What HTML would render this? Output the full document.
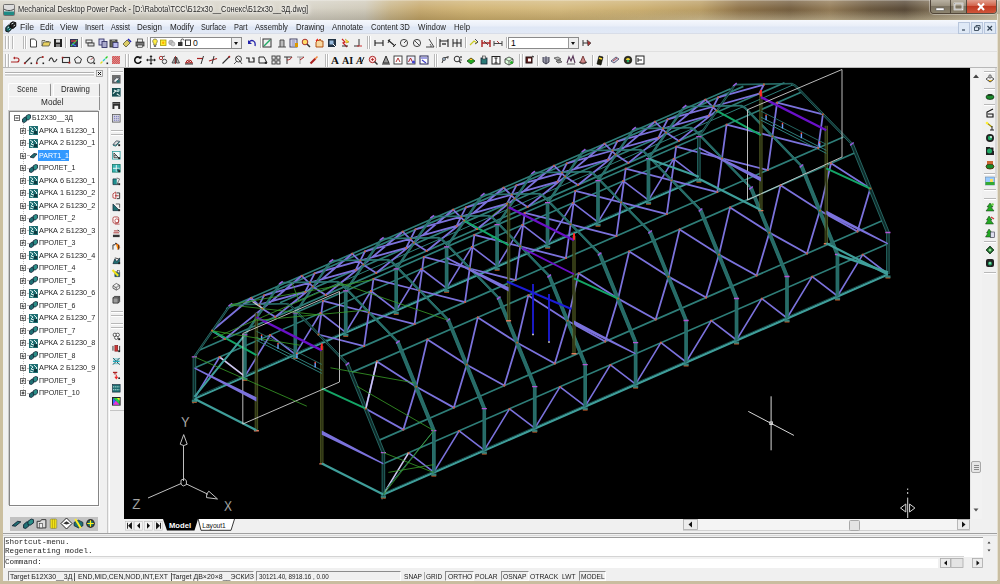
<!DOCTYPE html><html><head><meta charset="utf-8"><title>Mechanical Desktop Power Pack</title><style>
*{box-sizing:border-box;margin:0;padding:0}
html,body{width:1000px;height:584px;overflow:hidden;background:#f0f0f0}
body{position:relative;font-family:"Liberation Sans",sans-serif;font-size:9.4px;color:#000}
.abs{position:absolute}
.t{position:absolute;white-space:nowrap;line-height:1;transform-origin:0 0;color:#262626}
.ic{position:absolute;overflow:visible}
#title{left:0;top:0;width:1000px;height:20px;background:linear-gradient(90deg,#d3cfc2 0px,#d6d2c6 150px,#d4d0c3 300px,#cdc7b6 365px,#c7b283 390px,#c4a566 420px,#cfb06c 470px,#d2b574 560px,#c9aa66 640px,#b7985a 700px,#86683a 740px,#6a5230 790px,#8a7048 830px,#5e4a2e 870px,#4a3a26 905px,#6b5a40 925px,#b9ad94 1000px)}
#titlesh2{left:560px;top:0;width:440px;height:20px;background:linear-gradient(180deg,rgba(210,198,165,0) 50%,rgba(214,203,172,.6) 100%);-webkit-mask-image:linear-gradient(90deg,transparent,#000 140px);mask-image:linear-gradient(90deg,transparent,#000 140px)}
#titlesh{left:0;top:0;width:1000px;height:20px;background:linear-gradient(180deg,rgba(255,255,255,.55) 0,rgba(255,255,255,.25) 1.5px,rgba(255,255,255,.10) 8px,rgba(0,0,0,.12) 20px)}
#ttext{left:17.5px;top:4.5px;font-size:9.45px;white-space:nowrap;color:#111;text-shadow:0 0 4px #fff,0 0 6px #fff,0 0 8px #fff;letter-spacing:-.02px}
#bl{left:0;top:20px;width:2.5px;height:564px;background:#cbbf9f}
#br{left:996.6px;top:14px;width:3.4px;height:570px;background:#c9bea2;border-left:1px solid #e6e1d2}
#bb{left:0;top:580.3px;width:1000px;height:3.7px;background:#c9bd9f}
#menubar{left:2.5px;top:20px;width:994.5px;height:14px;background:linear-gradient(180deg,#f5f8fd 0,#e9eef8 45%,#dfe7f5 55%,#e2e9f6 100%);border-bottom:1px solid #d8dde8}
.mi{position:absolute;top:22.2px;font-size:9.5px;white-space:nowrap;color:#0a0a0a}
#tb{left:3px;top:34px;width:994px;height:34px;background:#f0f0f0}
.grip{position:absolute;width:1px;background:#b9b9b9;box-shadow:1px 0 0 #fff}
.sep{position:absolute;width:1px;height:11px;background:#b4b4b4;box-shadow:1px 0 0 #fff}
.combo{position:absolute;background:#fff;border:1px solid #8a8a8a;height:12px}
.cbtn{position:absolute;top:0;right:0;width:10px;height:10px;background:#eee;border-left:1px solid #999}
.cbtn:after{content:"";position:absolute;left:2px;top:4px;border:2.5px solid transparent;border-top:3px solid #111}
#vp{left:124px;top:68px;width:846px;height:451px;background:#000;overflow:hidden}
#browser{left:3px;top:68px;width:105px;height:465px;background:#f0f0f0}
#tree{left:8.5px;top:110.5px;width:90.5px;height:395.5px;background:#fff;border:1px solid #858585;box-shadow:-1px -1px 0 #c9c9c9,1px 1px 0 #fbfbfb}
.tr{position:absolute;font-size:8.7px;white-space:nowrap;height:12px;line-height:12px;color:#111;letter-spacing:-.1px}
.pm{position:absolute;width:5px;height:5px;border:1px solid #848484;background:#fff}
.pm:before{content:"";position:absolute;left:0.5px;top:1px;width:2px;height:1px;background:#222}
.pm:after{content:"";position:absolute;left:1px;top:0.5px;width:1px;height:2px;background:#222}
#ltb{left:109px;top:68px;width:15px;height:465px;background:#f0f0f0;border-left:1px solid #fff}
#rsb{left:970px;top:68px;width:12px;height:451px;background:#f2f2f2;border-left:1px solid #e4e4e4}
#rtb{left:982px;top:68px;width:15px;height:465px;background:#f0f0f0}
#tabs{left:124px;top:519px;width:846px;height:13px;background:#f0f0f0}
#cmd{left:3px;top:533px;width:994px;height:37px;background:#f0f0f0;border-top:1px solid #a0a0a0}
#cmdbox{left:4px;top:537.3px;width:979px;height:31px;background:#fff;border-top:1px solid #9a9a9a}
.ct{position:absolute;left:5px;font-family:"Liberation Mono",monospace;font-size:7.75px;white-space:nowrap;color:#111;letter-spacing:0}
#status{left:3px;top:570px;width:994px;height:11px;background:#f0f0f0}
.sb{position:absolute;top:571px;height:10px;font-size:8.1px;line-height:10px;white-space:nowrap;color:#222;letter-spacing:-.25px}
.sbox{position:absolute;top:571px;height:10px;border:1px solid #8c8c8c;border-right-color:#fff;border-bottom-color:#fff}
</style></head><body>
<div id="title" class="abs"></div><div id="titlesh" class="abs"></div><div id="titlesh2" class="abs"></div>
<svg class="ic" style="left:3px;top:4px" width="12" height="12" viewBox="0 0 12 12"><rect x=".5" y=".5" width="11" height="11" rx="1" fill="#ddd" stroke="#555" stroke-width=".8"/><path d="M1 5c2 2 8 2 10 0" fill="none" stroke="#444" stroke-width="1"/><rect x="1" y="7.5" width="10" height="3.5" fill="#1e8a84"/></svg>
<div class="t" style="left:17.50px;top:5.31px;font-size:9.2px;transform:scaleX(0.8071);text-shadow:0 0 4px #fff,0 0 6px #fff,0 0 9px #fff;">Mechanical Desktop Power Pack - [D:\Rabota\ТСС\Б12х30__Сонекс\Б12х30__3Д.dwg]</div>
<div class="abs" style="left:930px;top:0;width:67px;height:14px;border-radius:0 0 4px 4px;border:1px solid rgba(60,50,40,.75);border-top:none;overflow:hidden;box-shadow:0 0 0 1px rgba(255,255,255,.35)"><div class="abs" style="left:0;top:0;width:20px;height:13px;background:linear-gradient(180deg,#b9b1a2 0,#9a917f 45%,#7d7462 50%,#8d846f 100%);border-right:1px solid rgba(50,40,30,.7)"></div><div class="abs" style="left:20px;top:0;width:16px;height:13px;background:linear-gradient(180deg,#b9b1a2 0,#9a917f 45%,#7d7462 50%,#8d846f 100%);border-right:1px solid rgba(50,40,30,.7)"></div><div class="abs" style="left:36px;top:0;width:30px;height:13px;background:linear-gradient(180deg,#e2a08e 0,#d2624a 45%,#c03a22 50%,#d0553a 100%)"></div></div>
<svg class="ic" style="left:930px;top:0" width="67" height="14" viewBox="0 0 67 14"><rect x="6" y="8" width="8" height="2.4" fill="#fff" stroke="#555" stroke-width=".5"/><rect x="24.5" y="3.5" width="8" height="6" fill="none" stroke="#fff" stroke-width="1.6"/><rect x="24.5" y="3.5" width="8" height="6" fill="none" stroke="#555" stroke-width=".3"/><path d="M48 3.5l6 6.5M54 3.5l-6 6.5" stroke="#fff" stroke-width="2"/></svg>
<div id="bl" class="abs"></div><div id="br" class="abs"></div><div id="bb" class="abs"></div>
<div id="menubar" class="abs"></div>
<svg class="ic" style="left:4.5px;top:21px" width="12" height="12" viewBox="0 0 12 12"><path d="M.8 6.500l2.700-2.500 2.700 .800v3.700L3.500 11 .8 10.200z" fill="#1a5e62" stroke="#0a0a0a" stroke-width=".9"/><path d="M5 2.500L7.800 .8l3 .8v3.600L8 7.500l-3-.8z" fill="#1d1d1d" stroke="#0a0a0a" stroke-width=".9"/><path d="M6.500 3l2-1M2.500 7l1.500-1M8.500 5l1.500-1" stroke="#e8f6f4" stroke-width=".9"/><path d="M4 9l1.500-1.500" stroke="#7fd" stroke-width=".8"/></svg>
<div class="t" style="left:20.00px;top:22.87px;font-size:8.9px;transform:scaleX(0.9762);">File</div>
<div class="t" style="left:40.00px;top:22.87px;font-size:8.9px;transform:scaleX(0.8803);">Edit</div>
<div class="t" style="left:60.00px;top:22.87px;font-size:8.9px;transform:scaleX(0.9409);">View</div>
<div class="t" style="left:85.00px;top:22.87px;font-size:8.9px;transform:scaleX(0.8311);">Insert</div>
<div class="t" style="left:111.00px;top:22.87px;font-size:8.9px;transform:scaleX(0.8005);">Assist</div>
<div class="t" style="left:137.00px;top:22.87px;font-size:8.9px;transform:scaleX(0.9024);">Design</div>
<div class="t" style="left:169.50px;top:22.87px;font-size:8.9px;transform:scaleX(0.9155);">Modify</div>
<div class="t" style="left:201.00px;top:22.87px;font-size:8.9px;transform:scaleX(0.8150);">Surface</div>
<div class="t" style="left:234.00px;top:22.87px;font-size:8.9px;transform:scaleX(0.8270);">Part</div>
<div class="t" style="left:255.00px;top:22.87px;font-size:8.9px;transform:scaleX(0.8554);">Assembly</div>
<div class="t" style="left:295.50px;top:22.87px;font-size:8.9px;transform:scaleX(0.8730);">Drawing</div>
<div class="t" style="left:332.00px;top:22.87px;font-size:8.9px;transform:scaleX(0.8756);">Annotate</div>
<div class="t" style="left:371.00px;top:22.87px;font-size:8.9px;transform:scaleX(0.8662);">Content 3D</div>
<div class="t" style="left:417.60px;top:22.87px;font-size:8.9px;transform:scaleX(0.8845);">Window</div>
<div class="t" style="left:454.00px;top:22.87px;font-size:8.9px;transform:scaleX(0.8741);">Help</div>
<svg class="ic" style="left:958px;top:21.5px" width="12" height="12" viewBox="0 0 12 12"><rect x=".5" y=".5" width="11" height="11" fill="#dfe9f6" stroke="#b8c6dc" stroke-width="1"/><path d="M4 8h3" stroke="#345" stroke-width="1.2"/></svg>
<svg class="ic" style="left:971px;top:21.5px" width="12" height="12" viewBox="0 0 12 12"><rect x=".5" y=".5" width="11" height="11" fill="#dfe9f6" stroke="#b8c6dc" stroke-width="1"/><path d="M3.5 5h4v3.5h-4zM5 5V3.5h4V7H7.5" fill="none" stroke="#345" stroke-width=".9"/></svg>
<svg class="ic" style="left:984px;top:21.5px" width="12" height="12" viewBox="0 0 12 12"><rect x=".5" y=".5" width="11" height="11" fill="#dfe9f6" stroke="#b8c6dc" stroke-width="1"/><path d="M3.5 4l4.5 4.5M8 4L3.5 8.500" stroke="#345" stroke-width="1.2"/></svg>
<div id="tb" class="abs"></div>
<div class="grip" style="left:5px;top:36px;height:13px"></div>
<div class="grip" style="left:7.5px;top:36px;height:13px"></div>
<div class="grip" style="left:11.5px;top:36px;height:13px"></div>
<div class="grip" style="left:22.5px;top:36px;height:13px"></div>
<div class="grip" style="left:25px;top:36px;height:13px"></div>
<svg class="ic" style="left:28.0px;top:37.5px" width="10" height="10" viewBox="0 0 10 10"><path d="M2.5 1h4l2 2v6h-6z" fill="#fff" stroke="#333" stroke-width=".9"/></svg>
<svg class="ic" style="left:40.5px;top:37.5px" width="10" height="10" viewBox="0 0 10 10"><path d="M1 8l1.5-4h7l-1.5 4z" fill="#e8d060" stroke="#554" stroke-width=".8"/><path d="M1 8V2.5h3l1 1h3" fill="none" stroke="#554" stroke-width=".8"/></svg>
<svg class="ic" style="left:52.7px;top:37.5px" width="10" height="10" viewBox="0 0 10 10"><rect x="1" y="1" width="8" height="8" fill="#222"/><rect x="3" y="1.5" width="4" height="3" fill="#ddd"/><rect x="3" y="6" width="4" height="3" fill="#888"/></svg>
<svg class="ic" style="left:69.0px;top:37.5px" width="10" height="10" viewBox="0 0 10 10"><rect x="1" y="1" width="8" height="8" fill="#335" /><path d="M2 8L8 2" stroke="#4c4" stroke-width="1.2"/><path d="M2 3h5" stroke="#e44" stroke-width="1.2"/><path d="M3 6l4 2" stroke="#48f" stroke-width="1.2"/></svg>
<svg class="ic" style="left:84.7px;top:37.5px" width="10" height="10" viewBox="0 0 10 10"><rect x="1" y="2" width="6" height="3" fill="none" stroke="#333" stroke-width=".9"/><rect x="3" y="5" width="6" height="3" fill="#ddd" stroke="#333" stroke-width=".9"/></svg>
<svg class="ic" style="left:97.7px;top:37.5px" width="10" height="10" viewBox="0 0 10 10"><rect x="1" y="1" width="5" height="6" fill="#cce" stroke="#336" stroke-width=".9"/><rect x="4" y="3.5" width="5" height="6" fill="#aac" stroke="#336" stroke-width=".9"/></svg>
<svg class="ic" style="left:109.4px;top:37.5px" width="10" height="10" viewBox="0 0 10 10"><rect x="1" y="2" width="7" height="7" fill="#665" stroke="#333" stroke-width=".9"/><rect x="4" y="4.5" width="5" height="5" fill="#bbe" stroke="#336" stroke-width=".8"/><rect x="3" y="1" width="3" height="2" fill="#999"/></svg>
<svg class="ic" style="left:122.4px;top:37.5px" width="10" height="10" viewBox="0 0 10 10"><path d="M1 6l4-4 3 3-4 4z" fill="#dc6" stroke="#553" stroke-width=".8"/><path d="M6 1l3 3" stroke="#22a" stroke-width="1.6"/></svg>
<svg class="ic" style="left:135.4px;top:37.5px" width="10" height="10" viewBox="0 0 10 10"><rect x="1" y="4" width="8" height="4" fill="#777" stroke="#333" stroke-width=".8"/><rect x="2.5" y="1" width="5" height="3" fill="#eee" stroke="#333" stroke-width=".7"/><rect x="2.5" y="7" width="5" height="2.5" fill="#ddd" stroke="#333" stroke-width=".6"/></svg>
<div class="sep" style="left:65px;top:37px"></div>
<div class="sep" style="left:81px;top:37px"></div>
<div class="sep" style="left:147px;top:37px"></div>
<div class="combo" style="left:149.5px;top:36.5px;width:92.5px"><div class="cbtn"></div></div>
<svg class="ic" style="left:151px;top:37.5px" width="50" height="10" viewBox="0 0 50 10"><path d="M4 1a2.3 2.3 0 0 1 1.3 4.2V7H2.7V5.200A2.300 2.300 0 0 1 4 1z" fill="#fe4" stroke="#664" stroke-width=".7"/><rect x="2.9" y="7.3" width="2.200" height="1.5" fill="#555"/><rect x="9.5" y="2" width="5.5" height="5.5" fill="#fe3" stroke="#a90" stroke-width=".8"/><circle cx="12.2" cy="4.7" r="1.2" fill="#fa0"/><circle cx="20" cy="4.5" r="2.3" fill="#bbb" stroke="#888" stroke-width=".6"/><circle cx="22" cy="6" r="2" fill="#ccc" stroke="#999" stroke-width=".6"/><rect x="27" y="4" width="4.500" height="4" fill="#333"/><path d="M30 4V2.500a1.500 1.500 0 0 1 3 0" fill="none" stroke="#333" stroke-width=".9"/><rect x="34.500" y="2" width="5" height="5.500" fill="#fff" stroke="#222" stroke-width=".9"/><text x="42" y="8" font-family="Liberation Sans,sans-serif" font-size="8.600" fill="#111">0</text></svg>
<svg class="ic" style="left:246.7px;top:37.5px" width="10" height="10" viewBox="0 0 10 10"><path d="M2 4c3-3 7-1 6 4" fill="none" stroke="#22a" stroke-width="1.3"/><path d="M1 2v4h4z" fill="#22a"/></svg>
<svg class="ic" style="left:262.3px;top:37.5px" width="10" height="10" viewBox="0 0 10 10"><rect x="1" y="1" width="8" height="8" fill="none" stroke="#333" stroke-width="1"/><path d="M2 8L8 2" stroke="#2a6" stroke-width="1.4"/></svg>
<svg class="ic" style="left:276.6px;top:37.5px" width="10" height="10" viewBox="0 0 10 10"><path d="M1 9h8M3 9V2h4v7" fill="#bbb" stroke="#444" stroke-width=".9"/></svg>
<svg class="ic" style="left:288.8px;top:37.5px" width="10" height="10" viewBox="0 0 10 10"><rect x="1" y="1" width="7" height="8" fill="#eef" stroke="#335" stroke-width=".9"/><path d="M2.5 3h4M2.5 5h4M2.5 7h4" stroke="#558" stroke-width=".8"/><rect x="6" y="5" width="3" height="4" fill="#d90"/></svg>
<svg class="ic" style="left:301.3px;top:37.5px" width="10" height="10" viewBox="0 0 10 10"><circle cx="4" cy="4" r="2.8" fill="#fd6" stroke="#a33" stroke-width="1"/><path d="M6 6l3 3" stroke="#333" stroke-width="1.5"/></svg>
<svg class="ic" style="left:313.8px;top:37.5px" width="10" height="10" viewBox="0 0 10 10"><path d="M2 9V4l2-2 1 1 1-2 1 2 2 0v6z" fill="#f8d8a0" stroke="#a40" stroke-width=".9"/><path d="M2 3l2-2" stroke="#e22" stroke-width="1.2"/></svg>
<svg class="ic" style="left:326.5px;top:37.5px" width="10" height="10" viewBox="0 0 10 10"><rect x="1" y="1" width="8" height="8" fill="#234"/><rect x="2.5" y="2.5" width="4" height="4" fill="#9bd"/><path d="M6 6l3 3" stroke="#fff" stroke-width="1"/></svg>
<svg class="ic" style="left:339.5px;top:37.5px" width="10" height="10" viewBox="0 0 10 10"><path d="M2 1l3 3-2 1 4 4" fill="none" stroke="#c22" stroke-width="1.2"/><path d="M5 1l4 3-3 1" fill="#fd3" stroke="#a80" stroke-width=".6"/><path d="M2 8h6" stroke="#333" stroke-width="1"/></svg>
<svg class="ic" style="left:352.5px;top:37.5px" width="10" height="10" viewBox="0 0 10 10"><path d="M6 1v7H1" fill="none" stroke="#333" stroke-width="1"/><path d="M4 8h5" stroke="#c33" stroke-width="1"/></svg>
<div class="sep" style="left:259.5px;top:37px"></div>
<div class="grip" style="left:366.5px;top:36px;height:13px"></div>
<div class="grip" style="left:369px;top:36px;height:13px"></div>
<svg class="ic" style="left:373.6px;top:37.5px" width="10" height="10" viewBox="0 0 10 10"><path d="M1 2v6M9 2v6M1 5h8" fill="none" stroke="#222" stroke-width="1.1"/></svg>
<svg class="ic" style="left:386.6px;top:37.5px" width="10" height="10" viewBox="0 0 10 10"><path d="M1 2l7 6" stroke="#222" stroke-width="1.1"/><path d="M1 5l2-4M6 9l3-3" stroke="#222" stroke-width=".9"/></svg>
<svg class="ic" style="left:398.8px;top:37.5px" width="10" height="10" viewBox="0 0 10 10"><circle cx="5" cy="5" r="3.6" fill="none" stroke="#333" stroke-width=".9"/><path d="M5 5l2.5-2.5" stroke="#333" stroke-width=".9"/></svg>
<svg class="ic" style="left:411.8px;top:37.5px" width="10" height="10" viewBox="0 0 10 10"><circle cx="5" cy="5" r="3.6" fill="none" stroke="#333" stroke-width=".9"/><path d="M2.5 2.5l5 5" stroke="#333" stroke-width=".9"/></svg>
<svg class="ic" style="left:424.8px;top:37.5px" width="10" height="10" viewBox="0 0 10 10"><path d="M1 9h8L4 1" fill="none" stroke="#333" stroke-width=".9"/><path d="M6 9a3 3 0 0 0-1-3" fill="none" stroke="#333" stroke-width=".8"/></svg>
<svg class="ic" style="left:439.0px;top:37.5px" width="10" height="10" viewBox="0 0 10 10"><path d="M1 1v8M9 1v8M1 3h8" fill="none" stroke="#222" stroke-width="1.1"/><path d="M3 6h4" stroke="#222" stroke-width="1.3"/></svg>
<svg class="ic" style="left:452.0px;top:37.5px" width="10" height="10" viewBox="0 0 10 10"><path d="M1 1v8M5 1v8M9 1v8M1 5h8" fill="none" stroke="#222" stroke-width="1"/></svg>
<svg class="ic" style="left:469.0px;top:37.5px" width="10" height="10" viewBox="0 0 10 10"><path d="M1 7l4-4 3 2" fill="none" stroke="#cc2" stroke-width="1.2"/><path d="M6 1l3 3-3 2" fill="none" stroke="#333" stroke-width=".9"/></svg>
<svg class="ic" style="left:480.5px;top:37.5px" width="10" height="10" viewBox="0 0 10 10"><path d="M1 2v7M9 2v7M1 5h8" fill="none" stroke="#a22" stroke-width="1.4"/><path d="M3 3l4 4" stroke="#333" stroke-width=".8"/></svg>
<svg class="ic" style="left:492.7px;top:37.5px" width="10" height="10" viewBox="0 0 10 10"><path d="M1 3v5M9 3v5M1 5.5h8" fill="none" stroke="#444" stroke-width="1"/><path d="M4 3l2 2" stroke="#a22" stroke-width=".9"/></svg>
<div class="sep" style="left:436px;top:37px"></div>
<div class="sep" style="left:465px;top:37px"></div>
<div class="sep" style="left:505.5px;top:37px"></div>
<div class="combo" style="left:508px;top:36.5px;width:71px"><div class="cbtn"></div></div>
<div class="abs" style="left:511px;top:37.5px;font-size:8.6px;line-height:10px">1</div>
<svg class="ic" style="left:582.0px;top:37.5px" width="10" height="10" viewBox="0 0 10 10"><path d="M1 2v6M1 5h5" fill="none" stroke="#333" stroke-width="1"/><path d="M5 2l4 3-3 3z" fill="#a33" stroke="#333" stroke-width=".6"/></svg>
<div class="grip" style="left:5px;top:53.5px;height:13px"></div>
<div class="grip" style="left:7.5px;top:53.5px;height:13px"></div>
<svg class="ic" style="left:10.0px;top:55.0px" width="10" height="10" viewBox="0 0 10 10"><path d="M1 7h6a2 2 0 0 0 0-4H5" fill="none" stroke="#a22" stroke-width="1.1"/><path d="M5 1.5v3L3 3z" fill="#a22"/></svg>
<svg class="ic" style="left:22.8px;top:55.0px" width="10" height="10" viewBox="0 0 10 10"><path d="M1.5 8.5l6-6" stroke="#333" stroke-width="1.1"/><circle cx="1.8" cy="8.2" r="1" fill="#a22"/><rect x="7.5" y="7.5" width="1.6" height="1.6" fill="#222"/></svg>
<svg class="ic" style="left:35.3px;top:55.0px" width="10" height="10" viewBox="0 0 10 10"><path d="M1.5 8.5C1.5 4 4 2 8 2" fill="none" stroke="#333" stroke-width="1.1"/><circle cx="1.8" cy="8.2" r="1" fill="#a22"/><circle cx="7.8" cy="2" r="1" fill="#a22"/><rect x="7.5" y="7.5" width="1.6" height="1.6" fill="#222"/></svg>
<svg class="ic" style="left:48.3px;top:55.0px" width="10" height="10" viewBox="0 0 10 10"><path d="M1 6c1.5-4 3-4 4-1s2.5 2 4-1" fill="none" stroke="#333" stroke-width="1.1"/></svg>
<svg class="ic" style="left:60.8px;top:55.0px" width="10" height="10" viewBox="0 0 10 10"><rect x="1.5" y="2.5" width="7" height="5" fill="none" stroke="#333" stroke-width="1.1"/><rect x="0.8" y="1.8" width="1.6" height="1.6" fill="#a22"/><rect x="7.5" y="6.8" width="1.8" height="1.8" fill="#a22"/></svg>
<svg class="ic" style="left:73.0px;top:55.0px" width="10" height="10" viewBox="0 0 10 10"><path d="M5 1.5l3.5 2.5-1.3 4h-4.4L1.5 4z" fill="none" stroke="#333" stroke-width="1"/></svg>
<svg class="ic" style="left:85.5px;top:55.0px" width="10" height="10" viewBox="0 0 10 10"><circle cx="4.8" cy="4.8" r="3.5" fill="none" stroke="#333" stroke-width="1"/><path d="M4.8 4.8l2-2" stroke="#a22" stroke-width=".9"/><rect x="7.5" y="7.5" width="1.6" height="1.6" fill="#222"/></svg>
<svg class="ic" style="left:98.5px;top:55.0px" width="10" height="10" viewBox="0 0 10 10"><path d="M1.5 8.5l2-2" stroke="#dd2" stroke-width="1.3"/><path d="M4 6l2-2" stroke="#2cc" stroke-width="1.3"/><path d="M6.5 3.5l2-2" stroke="#2c2" stroke-width="1.3"/><rect x="7.5" y="7.5" width="1.6" height="1.6" fill="#222"/></svg>
<svg class="ic" style="left:110.7px;top:55.0px" width="10" height="10" viewBox="0 0 10 10"><rect x="1" y="1" width="8" height="8" fill="#d88"/><path d="M1 3l2-2M1 5l4-4M1 7l6-6M1 9l8-8M3 9l6-6M5 9l4-4M7 9l2-2" stroke="#c44" stroke-width=".7"/></svg>
<div class="grip" style="left:125px;top:53.5px;height:13px"></div>
<div class="grip" style="left:127.5px;top:53.5px;height:13px"></div>
<svg class="ic" style="left:132.8px;top:55.0px" width="10" height="10" viewBox="0 0 10 10"><path d="M7.5 3.2A3.2 3.2 0 1 0 8 6" fill="none" stroke="#111" stroke-width="1.6"/><path d="M5.5 3.5h3v-3z" fill="#111"/></svg>
<svg class="ic" style="left:145.8px;top:55.0px" width="10" height="10" viewBox="0 0 10 10"><path d="M5 1v8M1 5h8" stroke="#222" stroke-width="1.1"/><path d="M5 0l1.5 2h-3zM5 10l1.5-2h-3zM0 5l2-1.5v3zM10 5l-2-1.5v3z" fill="#222"/></svg>
<svg class="ic" style="left:158.3px;top:55.0px" width="10" height="10" viewBox="0 0 10 10"><circle cx="3" cy="3" r="1.7" fill="none" stroke="#a22" stroke-width=".9"/><circle cx="6.5" cy="6.5" r="2.2" fill="none" stroke="#333" stroke-width=".9"/><path d="M4 2l3-1" stroke="#333" stroke-width=".8"/></svg>
<svg class="ic" style="left:171.3px;top:55.0px" width="10" height="10" viewBox="0 0 10 10"><path d="M4.5 1v8" stroke="#a22" stroke-width=".9"/><path d="M4 2L1 8h3zM5.5 2l3 6h-3z" fill="#bbb" stroke="#333" stroke-width=".8"/></svg>
<svg class="ic" style="left:183.5px;top:55.0px" width="10" height="10" viewBox="0 0 10 10"><path d="M1 8h8M2 8a3 3 0 0 1 6 0M3.5 8a1.5 1.5 0 0 1 3 0" fill="none" stroke="#a22" stroke-width="1"/><path d="M1 9h8" stroke="#333" stroke-width="1"/></svg>
<svg class="ic" style="left:195.7px;top:55.0px" width="10" height="10" viewBox="0 0 10 10"><path d="M1 3.5h6" stroke="#a22" stroke-width="1.2"/><path d="M7.5 1L5 9" stroke="#333" stroke-width="1"/></svg>
<svg class="ic" style="left:208.2px;top:55.0px" width="10" height="10" viewBox="0 0 10 10"><path d="M1 6l8-2.5" stroke="#a22" stroke-width="1.2"/><path d="M6 1L4 9" stroke="#333" stroke-width="1"/></svg>
<svg class="ic" style="left:220.7px;top:55.0px" width="10" height="10" viewBox="0 0 10 10"><path d="M1.5 8.5l7-7" stroke="#333" stroke-width="1.1"/><circle cx="8.3" cy="1.7" r="1" fill="#a22"/></svg>
<svg class="ic" style="left:232.9px;top:55.0px" width="10" height="10" viewBox="0 0 10 10"><circle cx="5.5" cy="4" r="3" fill="none" stroke="#333" stroke-width=".9"/><path d="M1 9l3-3M7 6l2 3M3 2l5 5" stroke="#333" stroke-width=".8"/></svg>
<svg class="ic" style="left:245.2px;top:55.0px" width="10" height="10" viewBox="0 0 10 10"><path d="M1 3h3v4h5V3H7" fill="none" stroke="#222" stroke-width="1.2"/></svg>
<svg class="ic" style="left:258.4px;top:55.0px" width="10" height="10" viewBox="0 0 10 10"><path d="M1 2h5l3 6H1z" fill="none" stroke="#222" stroke-width="1"/><rect x="6.8" y="6.8" width="2" height="2" fill="#222"/></svg>
<svg class="ic" style="left:270.9px;top:55.0px" width="10" height="10" viewBox="0 0 10 10"><rect x="1" y="1" width="3.2" height="3.2" fill="none" stroke="#333" stroke-width=".9"/><rect x="5.8" y="1" width="3.2" height="3.2" fill="none" stroke="#333" stroke-width=".9"/><rect x="1" y="5.8" width="3.2" height="3.2" fill="none" stroke="#333" stroke-width=".9"/><rect x="5.8" y="5.8" width="3.2" height="3.2" fill="none" stroke="#333" stroke-width=".9"/></svg>
<svg class="ic" style="left:283.0px;top:55.0px" width="10" height="10" viewBox="0 0 10 10"><path d="M1 2h8" stroke="#333" stroke-width="1"/><path d="M4 2v7" stroke="#333" stroke-width="1"/><path d="M4 5c2 0 4-1 5-3" fill="none" stroke="#a22" stroke-width="1"/></svg>
<svg class="ic" style="left:296.0px;top:55.0px" width="10" height="10" viewBox="0 0 10 10"><path d="M1 2l7 0" stroke="#999" stroke-width="1"/><path d="M4 2v7" stroke="#999" stroke-width="1"/><path d="M4 5l4-3" fill="none" stroke="#a22" stroke-width="1"/></svg>
<svg class="ic" style="left:309.0px;top:55.0px" width="10" height="10" viewBox="0 0 10 10"><path d="M1.5 8.5l5-5" stroke="#a22" stroke-width="2.2"/><path d="M6 4l2.5-2.5" stroke="#e84" stroke-width="1.6"/></svg>
<div class="grip" style="left:324.5px;top:53.5px;height:13px"></div>
<div class="grip" style="left:327px;top:53.5px;height:13px"></div>
<svg class="ic" style="left:330.4px;top:55.0px" width="10" height="10" viewBox="0 0 10 10"><text x="5" y="9" font-family="Liberation Serif,serif" font-size="11" font-weight="bold" text-anchor="middle" fill="#111">A</text></svg>
<svg class="ic" style="left:343.0px;top:55.0px" width="10" height="10" viewBox="0 0 10 10"><text x="4.5" y="9" font-family="Liberation Serif,serif" font-size="10" font-weight="bold" text-anchor="middle" fill="#111">AI</text></svg>
<svg class="ic" style="left:355.0px;top:55.0px" width="10" height="10" viewBox="0 0 10 10"><text x="4.5" y="9" font-family="Liberation Serif,serif" font-size="10" font-weight="bold" font-style="italic" text-anchor="middle" fill="#111">A</text><path d="M6 9l3-7" stroke="#222" stroke-width="1"/></svg>
<svg class="ic" style="left:368.0px;top:55.0px" width="10" height="10" viewBox="0 0 10 10"><circle cx="4.5" cy="4.5" r="3.2" fill="#fdd" stroke="#a22" stroke-width="1"/><path d="M6.5 6.5l3 3" stroke="#333" stroke-width="1.4"/><path d="M3 4.5h3M4.5 3v3" stroke="#a22" stroke-width=".8"/></svg>
<svg class="ic" style="left:380.6px;top:55.0px" width="10" height="10" viewBox="0 0 10 10"><path d="M5 1L2 8h6z" fill="#999" stroke="#222" stroke-width=".9"/><path d="M1 9h8" stroke="#222" stroke-width="1"/></svg>
<svg class="ic" style="left:393.0px;top:55.0px" width="10" height="10" viewBox="0 0 10 10"><rect x="1" y="1" width="8" height="8" fill="#fff" stroke="#333" stroke-width=".9"/><path d="M3 7l2-4 2 4" fill="none" stroke="#a22" stroke-width=".9"/></svg>
<svg class="ic" style="left:406.0px;top:55.0px" width="10" height="10" viewBox="0 0 10 10"><rect x="1" y="1" width="8" height="8" fill="#eef" stroke="#333" stroke-width=".9"/><path d="M2.5 7l2-4 2 4" fill="none" stroke="#a22" stroke-width="1"/><circle cx="7.5" cy="7" r="1.6" fill="#44c"/></svg>
<svg class="ic" style="left:418.8px;top:55.0px" width="10" height="10" viewBox="0 0 10 10"><rect x="1" y="1" width="8" height="8" fill="#fff" stroke="#225" stroke-width="1"/><path d="M2 3h6M3 5l4 3" stroke="#44c" stroke-width="1.2"/></svg>
<div class="grip" style="left:433.5px;top:53.5px;height:13px"></div>
<div class="grip" style="left:436px;top:53.5px;height:13px"></div>
<svg class="ic" style="left:440.4px;top:55.0px" width="10" height="10" viewBox="0 0 10 10"><path d="M2 8l2-5 4-1" fill="none" stroke="#333" stroke-width="1"/><circle cx="4" cy="4" r="1.6" fill="#9ab" stroke="#333" stroke-width=".6"/><path d="M6 2l3-1-1 3" fill="#555"/></svg>
<svg class="ic" style="left:453.4px;top:55.0px" width="10" height="10" viewBox="0 0 10 10"><circle cx="4" cy="4" r="2.8" fill="none" stroke="#333" stroke-width="1"/><path d="M6 6l2 2" stroke="#333" stroke-width="1.3"/><path d="M7 2h2M8 1v2M7 5h2" stroke="#333" stroke-width=".8"/></svg>
<svg class="ic" style="left:465.9px;top:55.0px" width="10" height="10" viewBox="0 0 10 10"><path d="M1 6l4-3 4 3-4 3z" fill="#2a2" stroke="#141" stroke-width=".8"/><path d="M3 5l2-2 2 2" fill="#fc3" stroke="#630" stroke-width=".5"/></svg>
<svg class="ic" style="left:478.5px;top:55.0px" width="10" height="10" viewBox="0 0 10 10"><rect x="2" y="3" width="6" height="6" fill="#2a7a78" stroke="#123" stroke-width=".8"/><rect x="3.5" y="1" width="3" height="3" fill="#ddd" stroke="#333" stroke-width=".6"/></svg>
<svg class="ic" style="left:491.0px;top:55.0px" width="10" height="10" viewBox="0 0 10 10"><rect x="1" y="1.5" width="8" height="7.5" fill="#fff" stroke="#222" stroke-width="1"/><path d="M5 3v5M3.5 3h3M3.5 8h3" stroke="#222" stroke-width="1"/></svg>
<svg class="ic" style="left:504.0px;top:55.0px" width="10" height="10" viewBox="0 0 10 10"><path d="M1 4l4-2 4 2v4l-4 2-4-2z" fill="#dfd" stroke="#333" stroke-width=".8"/><path d="M1 4l4 2 4-2M5 6v4" fill="none" stroke="#333" stroke-width=".7"/><circle cx="7.5" cy="7.5" r="1.5" fill="#2a2"/></svg>
<div class="grip" style="left:519px;top:53.5px;height:13px"></div>
<div class="grip" style="left:521.5px;top:53.5px;height:13px"></div>
<svg class="ic" style="left:525.0px;top:55.0px" width="10" height="10" viewBox="0 0 10 10"><rect x="1" y="2" width="6" height="6" fill="#622" stroke="#211" stroke-width="1"/><rect x="3" y="3.5" width="3" height="3" fill="#fff"/><path d="M7 1l2 1" stroke="#222" stroke-width="1"/></svg>
<svg class="ic" style="left:541.3px;top:55.0px" width="10" height="10" viewBox="0 0 10 10"><path d="M2 2v5l3 2 3-2V2" fill="#99a" stroke="#334" stroke-width=".9"/><path d="M5 1v8" stroke="#334" stroke-width=".8"/></svg>
<svg class="ic" style="left:553.0px;top:55.0px" width="10" height="10" viewBox="0 0 10 10"><path d="M1 3l4-1 3 2-4 1z" fill="#bbb" stroke="#444" stroke-width=".7"/><path d="M3 6l4-1 2 2-4 1z" fill="#999" stroke="#444" stroke-width=".7"/></svg>
<svg class="ic" style="left:566.0px;top:55.0px" width="10" height="10" viewBox="0 0 10 10"><path d="M1 8l2-6 2 4 2-5 2 7" fill="none" stroke="#535" stroke-width="1.1"/><path d="M1 9h8" stroke="#333" stroke-width=".8"/></svg>
<svg class="ic" style="left:577.7px;top:55.0px" width="10" height="10" viewBox="0 0 10 10"><path d="M5 1L2 8h6z" fill="#c88" stroke="#622" stroke-width=".8"/><path d="M1 7l4 2 4-2" fill="none" stroke="#333" stroke-width=".9"/></svg>
<svg class="ic" style="left:594.6px;top:55.0px" width="10" height="10" viewBox="0 0 10 10"><path d="M2 9l2-8 4 1-2 8z" fill="#221" stroke="#000" stroke-width=".6"/><path d="M4 3l3 1" stroke="#fd3" stroke-width="1.5"/></svg>
<svg class="ic" style="left:610.0px;top:55.0px" width="10" height="10" viewBox="0 0 10 10"><path d="M1 6l5-4 3 2-5 4z" fill="#ccd" stroke="#446" stroke-width=".8"/><path d="M3 6l4-3" stroke="#a22" stroke-width=".8"/></svg>
<svg class="ic" style="left:622.7px;top:55.0px" width="10" height="10" viewBox="0 0 10 10"><circle cx="5" cy="5" r="3.8" fill="#332" stroke="#000" stroke-width=".6"/><path d="M3 5a2 2 0 0 1 4 0" fill="#fd3"/><circle cx="5" cy="6" r="1.2" fill="#2a6"/></svg>
<svg class="ic" style="left:635.4px;top:55.0px" width="10" height="10" viewBox="0 0 10 10"><rect x="1" y="1" width="8" height="8" fill="#fff" stroke="#222" stroke-width="1"/><path d="M3 5h4M3 3v4" stroke="#222" stroke-width="1"/></svg>
<div class="sep" style="left:537px;top:54.5px"></div>
<div class="sep" style="left:592px;top:54.5px"></div>
<div class="sep" style="left:607px;top:54.5px"></div>
<div class="abs" style="left:3px;top:50.5px;width:994px;height:1px;background:#e0e0e0"></div>
<div class="abs" style="left:3px;top:67px;width:994px;height:1px;background:#b8b8b8"></div>
<div id="browser" class="abs"></div>
<div class="abs" style="left:5px;top:71.5px;width:89px;height:1px;background:#b0b0b0;box-shadow:0 1px 0 #fff,0 2.500px 0 #b0b0b0,0 3.500px 0 #fff"></div>
<svg class="ic" style="left:96px;top:69.5px" width="7" height="7" viewBox="0 0 7 7"><rect x=".5" y=".5" width="6" height="6" fill="#eee" stroke="#888" stroke-width=".7"/><path d="M2 2l3 3M5 2L2 5" stroke="#111" stroke-width="1"/></svg>
<div class="abs" style="left:8px;top:82px;width:92px;height:28px;background:#f0f0f0"></div>
<div class="abs" style="left:8px;top:83px;width:43px;height:13px;border:1px solid #fdfdfd;border-bottom:none;border-right:1px solid #8e8e8e;border-radius:2px 2px 0 0"></div>
<div class="abs" style="left:53px;top:83px;width:47px;height:13px;border:1px solid #fdfdfd;border-bottom:none;border-right:1px solid #8e8e8e;border-radius:2px 2px 0 0"></div>
<div class="abs" style="left:8px;top:96px;width:92px;height:14px;border-left:1px solid #fdfdfd;border-right:1px solid #8e8e8e;border-top:1px solid #fafafa"></div>
<div class="t" style="left:17.00px;top:84.55px;font-size:8.8px;transform:scaleX(0.8216);">Scene</div>
<div class="t" style="left:61.20px;top:84.55px;font-size:8.8px;transform:scaleX(0.8922);">Drawing</div>
<div class="t" style="left:41.20px;top:97.75px;font-size:8.8px;transform:scaleX(0.9387);">Model</div>
<div id="tree" class="abs"></div>
<svg class="ic" style="left:13.5px;top:115.00px" width="6" height="6" viewBox="0 0 6 6"><rect x=".5" y=".5" width="5" height="5" fill="#fff" stroke="#707070" stroke-width="1"/><path d="M1.500 3h3" stroke="#111" stroke-width=".9"/></svg>
<svg class="ic" style="left:22px;top:113.50px" width="9" height="9" viewBox="0 0 9 9"><path d="M.5 5l2.500-2 2 .5v3l-2.500 2-2-.500z" fill="#1f6f73" stroke="#123" stroke-width=".8"/><path d="M4 2l2.500-1.500 2 .5v3L6.500 6l-2-.5z" fill="#2b8f88" stroke="#123" stroke-width=".8"/></svg>
<div class="t" style="left:32.10px;top:114.10px;font-size:7.8px;transform:scaleX(0.8919);">Б12Х30__3Д</div>
<svg class="ic" style="left:20px;top:127.50px" width="6" height="6" viewBox="0 0 6 6"><rect x=".5" y=".5" width="5" height="5" fill="#fff" stroke="#707070" stroke-width="1"/><path d="M1.500 3h3" stroke="#111" stroke-width=".9"/><path d="M3 1.500v3" stroke="#111" stroke-width=".9"/></svg>
<div class="abs" style="left:26.5px;top:130.00px;width:3px;height:1px;background:#bbb"></div>
<svg class="ic" style="left:29px;top:126.00px" width="9" height="9" viewBox="0 0 9 9"><rect width="9" height="9" fill="#1f6f73"/><path d="M1 1l3 2-2 2 3 1M5 1l3 3-3 4M1 7l3 1" stroke="#d8f0ee" stroke-width="1" fill="none"/><rect x="5" y="5" width="3" height="3" fill="#0c3a40"/></svg>
<div class="t" style="left:38.50px;top:126.60px;font-size:7.8px;transform:scaleX(0.9388);">АРКА 1 Б1230_1</div>
<svg class="ic" style="left:20px;top:140.00px" width="6" height="6" viewBox="0 0 6 6"><rect x=".5" y=".5" width="5" height="5" fill="#fff" stroke="#707070" stroke-width="1"/><path d="M1.500 3h3" stroke="#111" stroke-width=".9"/><path d="M3 1.500v3" stroke="#111" stroke-width=".9"/></svg>
<div class="abs" style="left:26.5px;top:142.50px;width:3px;height:1px;background:#bbb"></div>
<svg class="ic" style="left:29px;top:138.50px" width="9" height="9" viewBox="0 0 9 9"><rect width="9" height="9" fill="#1f6f73"/><path d="M1 1l3 2-2 2 3 1M5 1l3 3-3 4M1 7l3 1" stroke="#d8f0ee" stroke-width="1" fill="none"/><rect x="5" y="5" width="3" height="3" fill="#0c3a40"/></svg>
<div class="t" style="left:38.50px;top:139.10px;font-size:7.8px;transform:scaleX(0.9388);">АРКА 2 Б1230_1</div>
<svg class="ic" style="left:20px;top:152.50px" width="6" height="6" viewBox="0 0 6 6"><rect x=".5" y=".5" width="5" height="5" fill="#fff" stroke="#707070" stroke-width="1"/><path d="M1.500 3h3" stroke="#111" stroke-width=".9"/><path d="M3 1.500v3" stroke="#111" stroke-width=".9"/></svg>
<div class="abs" style="left:26.5px;top:155.00px;width:3px;height:1px;background:#bbb"></div>
<svg class="ic" style="left:29px;top:151.00px" width="9" height="9" viewBox="0 0 9 9"><path d="M1 6l4-3.500 3 .5-3.500 4z" fill="#1f6f73" stroke="#123" stroke-width=".8"/></svg>
<div class="abs" style="left:38px;top:149.90px;width:31.2px;height:10.8px;background:#3399ff"></div>
<div class="t" style="left:38.80px;top:151.60px;font-size:7.8px;transform:scaleX(0.9064);color:#fff;">PART1_1</div>
<svg class="ic" style="left:20px;top:165.00px" width="6" height="6" viewBox="0 0 6 6"><rect x=".5" y=".5" width="5" height="5" fill="#fff" stroke="#707070" stroke-width="1"/><path d="M1.500 3h3" stroke="#111" stroke-width=".9"/><path d="M3 1.500v3" stroke="#111" stroke-width=".9"/></svg>
<div class="abs" style="left:26.5px;top:167.50px;width:3px;height:1px;background:#bbb"></div>
<svg class="ic" style="left:29px;top:163.50px" width="9" height="9" viewBox="0 0 9 9"><path d="M.5 5l2.500-2 2 .5v3l-2.500 2-2-.500z" fill="#1f6f73" stroke="#123" stroke-width=".8"/><path d="M4 2l2.500-1.500 2 .5v3L6.500 6l-2-.5z" fill="#2b8f88" stroke="#123" stroke-width=".8"/></svg>
<div class="t" style="left:38.50px;top:164.10px;font-size:7.8px;transform:scaleX(0.9039);">ПРОЛЕТ_1</div>
<svg class="ic" style="left:20px;top:177.50px" width="6" height="6" viewBox="0 0 6 6"><rect x=".5" y=".5" width="5" height="5" fill="#fff" stroke="#707070" stroke-width="1"/><path d="M1.500 3h3" stroke="#111" stroke-width=".9"/><path d="M3 1.500v3" stroke="#111" stroke-width=".9"/></svg>
<div class="abs" style="left:26.5px;top:180.00px;width:3px;height:1px;background:#bbb"></div>
<svg class="ic" style="left:29px;top:176.00px" width="9" height="9" viewBox="0 0 9 9"><rect width="9" height="9" fill="#1f6f73"/><path d="M1 1l3 2-2 2 3 1M5 1l3 3-3 4M1 7l3 1" stroke="#d8f0ee" stroke-width="1" fill="none"/><rect x="5" y="5" width="3" height="3" fill="#0c3a40"/></svg>
<div class="t" style="left:38.50px;top:176.60px;font-size:7.8px;transform:scaleX(0.9388);">АРКА 6 Б1230_1</div>
<svg class="ic" style="left:20px;top:190.00px" width="6" height="6" viewBox="0 0 6 6"><rect x=".5" y=".5" width="5" height="5" fill="#fff" stroke="#707070" stroke-width="1"/><path d="M1.500 3h3" stroke="#111" stroke-width=".9"/><path d="M3 1.500v3" stroke="#111" stroke-width=".9"/></svg>
<div class="abs" style="left:26.5px;top:192.50px;width:3px;height:1px;background:#bbb"></div>
<svg class="ic" style="left:29px;top:188.50px" width="9" height="9" viewBox="0 0 9 9"><rect width="9" height="9" fill="#1f6f73"/><path d="M1 1l3 2-2 2 3 1M5 1l3 3-3 4M1 7l3 1" stroke="#d8f0ee" stroke-width="1" fill="none"/><rect x="5" y="5" width="3" height="3" fill="#0c3a40"/></svg>
<div class="t" style="left:38.50px;top:189.10px;font-size:7.8px;transform:scaleX(0.9388);">АРКА 1 Б1230_2</div>
<svg class="ic" style="left:20px;top:202.50px" width="6" height="6" viewBox="0 0 6 6"><rect x=".5" y=".5" width="5" height="5" fill="#fff" stroke="#707070" stroke-width="1"/><path d="M1.500 3h3" stroke="#111" stroke-width=".9"/><path d="M3 1.500v3" stroke="#111" stroke-width=".9"/></svg>
<div class="abs" style="left:26.5px;top:205.00px;width:3px;height:1px;background:#bbb"></div>
<svg class="ic" style="left:29px;top:201.00px" width="9" height="9" viewBox="0 0 9 9"><rect width="9" height="9" fill="#1f6f73"/><path d="M1 1l3 2-2 2 3 1M5 1l3 3-3 4M1 7l3 1" stroke="#d8f0ee" stroke-width="1" fill="none"/><rect x="5" y="5" width="3" height="3" fill="#0c3a40"/></svg>
<div class="t" style="left:38.50px;top:201.60px;font-size:7.8px;transform:scaleX(0.9388);">АРКА 2 Б1230_2</div>
<svg class="ic" style="left:20px;top:215.00px" width="6" height="6" viewBox="0 0 6 6"><rect x=".5" y=".5" width="5" height="5" fill="#fff" stroke="#707070" stroke-width="1"/><path d="M1.500 3h3" stroke="#111" stroke-width=".9"/><path d="M3 1.500v3" stroke="#111" stroke-width=".9"/></svg>
<div class="abs" style="left:26.5px;top:217.50px;width:3px;height:1px;background:#bbb"></div>
<svg class="ic" style="left:29px;top:213.50px" width="9" height="9" viewBox="0 0 9 9"><path d="M.5 5l2.500-2 2 .5v3l-2.500 2-2-.500z" fill="#1f6f73" stroke="#123" stroke-width=".8"/><path d="M4 2l2.500-1.500 2 .5v3L6.500 6l-2-.5z" fill="#2b8f88" stroke="#123" stroke-width=".8"/></svg>
<div class="t" style="left:38.50px;top:214.10px;font-size:7.8px;transform:scaleX(0.9039);">ПРОЛЕТ_2</div>
<svg class="ic" style="left:20px;top:227.50px" width="6" height="6" viewBox="0 0 6 6"><rect x=".5" y=".5" width="5" height="5" fill="#fff" stroke="#707070" stroke-width="1"/><path d="M1.500 3h3" stroke="#111" stroke-width=".9"/><path d="M3 1.500v3" stroke="#111" stroke-width=".9"/></svg>
<div class="abs" style="left:26.5px;top:230.00px;width:3px;height:1px;background:#bbb"></div>
<svg class="ic" style="left:29px;top:226.00px" width="9" height="9" viewBox="0 0 9 9"><rect width="9" height="9" fill="#1f6f73"/><path d="M1 1l3 2-2 2 3 1M5 1l3 3-3 4M1 7l3 1" stroke="#d8f0ee" stroke-width="1" fill="none"/><rect x="5" y="5" width="3" height="3" fill="#0c3a40"/></svg>
<div class="t" style="left:38.50px;top:226.60px;font-size:7.8px;transform:scaleX(0.9388);">АРКА 2 Б1230_3</div>
<svg class="ic" style="left:20px;top:240.00px" width="6" height="6" viewBox="0 0 6 6"><rect x=".5" y=".5" width="5" height="5" fill="#fff" stroke="#707070" stroke-width="1"/><path d="M1.500 3h3" stroke="#111" stroke-width=".9"/><path d="M3 1.500v3" stroke="#111" stroke-width=".9"/></svg>
<div class="abs" style="left:26.5px;top:242.50px;width:3px;height:1px;background:#bbb"></div>
<svg class="ic" style="left:29px;top:238.50px" width="9" height="9" viewBox="0 0 9 9"><path d="M.5 5l2.500-2 2 .5v3l-2.500 2-2-.500z" fill="#1f6f73" stroke="#123" stroke-width=".8"/><path d="M4 2l2.500-1.500 2 .5v3L6.500 6l-2-.5z" fill="#2b8f88" stroke="#123" stroke-width=".8"/></svg>
<div class="t" style="left:38.50px;top:239.10px;font-size:7.8px;transform:scaleX(0.9039);">ПРОЛЕТ_3</div>
<svg class="ic" style="left:20px;top:252.50px" width="6" height="6" viewBox="0 0 6 6"><rect x=".5" y=".5" width="5" height="5" fill="#fff" stroke="#707070" stroke-width="1"/><path d="M1.500 3h3" stroke="#111" stroke-width=".9"/><path d="M3 1.500v3" stroke="#111" stroke-width=".9"/></svg>
<div class="abs" style="left:26.5px;top:255.00px;width:3px;height:1px;background:#bbb"></div>
<svg class="ic" style="left:29px;top:251.00px" width="9" height="9" viewBox="0 0 9 9"><rect width="9" height="9" fill="#1f6f73"/><path d="M1 1l3 2-2 2 3 1M5 1l3 3-3 4M1 7l3 1" stroke="#d8f0ee" stroke-width="1" fill="none"/><rect x="5" y="5" width="3" height="3" fill="#0c3a40"/></svg>
<div class="t" style="left:38.50px;top:251.60px;font-size:7.8px;transform:scaleX(0.9388);">АРКА 2 Б1230_4</div>
<svg class="ic" style="left:20px;top:265.00px" width="6" height="6" viewBox="0 0 6 6"><rect x=".5" y=".5" width="5" height="5" fill="#fff" stroke="#707070" stroke-width="1"/><path d="M1.500 3h3" stroke="#111" stroke-width=".9"/><path d="M3 1.500v3" stroke="#111" stroke-width=".9"/></svg>
<div class="abs" style="left:26.5px;top:267.50px;width:3px;height:1px;background:#bbb"></div>
<svg class="ic" style="left:29px;top:263.50px" width="9" height="9" viewBox="0 0 9 9"><path d="M.5 5l2.500-2 2 .5v3l-2.500 2-2-.500z" fill="#1f6f73" stroke="#123" stroke-width=".8"/><path d="M4 2l2.500-1.500 2 .5v3L6.500 6l-2-.5z" fill="#2b8f88" stroke="#123" stroke-width=".8"/></svg>
<div class="t" style="left:38.50px;top:264.10px;font-size:7.8px;transform:scaleX(0.9039);">ПРОЛЕТ_4</div>
<svg class="ic" style="left:20px;top:277.50px" width="6" height="6" viewBox="0 0 6 6"><rect x=".5" y=".5" width="5" height="5" fill="#fff" stroke="#707070" stroke-width="1"/><path d="M1.500 3h3" stroke="#111" stroke-width=".9"/><path d="M3 1.500v3" stroke="#111" stroke-width=".9"/></svg>
<div class="abs" style="left:26.5px;top:280.00px;width:3px;height:1px;background:#bbb"></div>
<svg class="ic" style="left:29px;top:276.00px" width="9" height="9" viewBox="0 0 9 9"><path d="M.5 5l2.500-2 2 .5v3l-2.500 2-2-.500z" fill="#1f6f73" stroke="#123" stroke-width=".8"/><path d="M4 2l2.500-1.500 2 .5v3L6.500 6l-2-.5z" fill="#2b8f88" stroke="#123" stroke-width=".8"/></svg>
<div class="t" style="left:38.50px;top:276.60px;font-size:7.8px;transform:scaleX(0.9039);">ПРОЛЕТ_5</div>
<svg class="ic" style="left:20px;top:290.00px" width="6" height="6" viewBox="0 0 6 6"><rect x=".5" y=".5" width="5" height="5" fill="#fff" stroke="#707070" stroke-width="1"/><path d="M1.500 3h3" stroke="#111" stroke-width=".9"/><path d="M3 1.500v3" stroke="#111" stroke-width=".9"/></svg>
<div class="abs" style="left:26.5px;top:292.50px;width:3px;height:1px;background:#bbb"></div>
<svg class="ic" style="left:29px;top:288.50px" width="9" height="9" viewBox="0 0 9 9"><rect width="9" height="9" fill="#1f6f73"/><path d="M1 1l3 2-2 2 3 1M5 1l3 3-3 4M1 7l3 1" stroke="#d8f0ee" stroke-width="1" fill="none"/><rect x="5" y="5" width="3" height="3" fill="#0c3a40"/></svg>
<div class="t" style="left:38.50px;top:289.10px;font-size:7.8px;transform:scaleX(0.9388);">АРКА 2 Б1230_6</div>
<svg class="ic" style="left:20px;top:302.50px" width="6" height="6" viewBox="0 0 6 6"><rect x=".5" y=".5" width="5" height="5" fill="#fff" stroke="#707070" stroke-width="1"/><path d="M1.500 3h3" stroke="#111" stroke-width=".9"/><path d="M3 1.500v3" stroke="#111" stroke-width=".9"/></svg>
<div class="abs" style="left:26.5px;top:305.00px;width:3px;height:1px;background:#bbb"></div>
<svg class="ic" style="left:29px;top:301.00px" width="9" height="9" viewBox="0 0 9 9"><path d="M.5 5l2.500-2 2 .5v3l-2.500 2-2-.500z" fill="#1f6f73" stroke="#123" stroke-width=".8"/><path d="M4 2l2.500-1.500 2 .5v3L6.500 6l-2-.5z" fill="#2b8f88" stroke="#123" stroke-width=".8"/></svg>
<div class="t" style="left:38.50px;top:301.60px;font-size:7.8px;transform:scaleX(0.9039);">ПРОЛЕТ_6</div>
<svg class="ic" style="left:20px;top:315.00px" width="6" height="6" viewBox="0 0 6 6"><rect x=".5" y=".5" width="5" height="5" fill="#fff" stroke="#707070" stroke-width="1"/><path d="M1.500 3h3" stroke="#111" stroke-width=".9"/><path d="M3 1.500v3" stroke="#111" stroke-width=".9"/></svg>
<div class="abs" style="left:26.5px;top:317.50px;width:3px;height:1px;background:#bbb"></div>
<svg class="ic" style="left:29px;top:313.50px" width="9" height="9" viewBox="0 0 9 9"><rect width="9" height="9" fill="#1f6f73"/><path d="M1 1l3 2-2 2 3 1M5 1l3 3-3 4M1 7l3 1" stroke="#d8f0ee" stroke-width="1" fill="none"/><rect x="5" y="5" width="3" height="3" fill="#0c3a40"/></svg>
<div class="t" style="left:38.50px;top:314.10px;font-size:7.8px;transform:scaleX(0.9388);">АРКА 2 Б1230_7</div>
<svg class="ic" style="left:20px;top:327.50px" width="6" height="6" viewBox="0 0 6 6"><rect x=".5" y=".5" width="5" height="5" fill="#fff" stroke="#707070" stroke-width="1"/><path d="M1.500 3h3" stroke="#111" stroke-width=".9"/><path d="M3 1.500v3" stroke="#111" stroke-width=".9"/></svg>
<div class="abs" style="left:26.5px;top:330.00px;width:3px;height:1px;background:#bbb"></div>
<svg class="ic" style="left:29px;top:326.00px" width="9" height="9" viewBox="0 0 9 9"><path d="M.5 5l2.500-2 2 .5v3l-2.500 2-2-.500z" fill="#1f6f73" stroke="#123" stroke-width=".8"/><path d="M4 2l2.500-1.500 2 .5v3L6.500 6l-2-.5z" fill="#2b8f88" stroke="#123" stroke-width=".8"/></svg>
<div class="t" style="left:38.50px;top:326.60px;font-size:7.8px;transform:scaleX(0.9039);">ПРОЛЕТ_7</div>
<svg class="ic" style="left:20px;top:340.00px" width="6" height="6" viewBox="0 0 6 6"><rect x=".5" y=".5" width="5" height="5" fill="#fff" stroke="#707070" stroke-width="1"/><path d="M1.500 3h3" stroke="#111" stroke-width=".9"/><path d="M3 1.500v3" stroke="#111" stroke-width=".9"/></svg>
<div class="abs" style="left:26.5px;top:342.50px;width:3px;height:1px;background:#bbb"></div>
<svg class="ic" style="left:29px;top:338.50px" width="9" height="9" viewBox="0 0 9 9"><rect width="9" height="9" fill="#1f6f73"/><path d="M1 1l3 2-2 2 3 1M5 1l3 3-3 4M1 7l3 1" stroke="#d8f0ee" stroke-width="1" fill="none"/><rect x="5" y="5" width="3" height="3" fill="#0c3a40"/></svg>
<div class="t" style="left:38.50px;top:339.10px;font-size:7.8px;transform:scaleX(0.9388);">АРКА 2 Б1230_8</div>
<svg class="ic" style="left:20px;top:352.50px" width="6" height="6" viewBox="0 0 6 6"><rect x=".5" y=".5" width="5" height="5" fill="#fff" stroke="#707070" stroke-width="1"/><path d="M1.500 3h3" stroke="#111" stroke-width=".9"/><path d="M3 1.500v3" stroke="#111" stroke-width=".9"/></svg>
<div class="abs" style="left:26.5px;top:355.00px;width:3px;height:1px;background:#bbb"></div>
<svg class="ic" style="left:29px;top:351.00px" width="9" height="9" viewBox="0 0 9 9"><path d="M.5 5l2.500-2 2 .5v3l-2.500 2-2-.500z" fill="#1f6f73" stroke="#123" stroke-width=".8"/><path d="M4 2l2.500-1.500 2 .5v3L6.500 6l-2-.5z" fill="#2b8f88" stroke="#123" stroke-width=".8"/></svg>
<div class="t" style="left:38.50px;top:351.60px;font-size:7.8px;transform:scaleX(0.9039);">ПРОЛЕТ_8</div>
<svg class="ic" style="left:20px;top:365.00px" width="6" height="6" viewBox="0 0 6 6"><rect x=".5" y=".5" width="5" height="5" fill="#fff" stroke="#707070" stroke-width="1"/><path d="M1.500 3h3" stroke="#111" stroke-width=".9"/><path d="M3 1.500v3" stroke="#111" stroke-width=".9"/></svg>
<div class="abs" style="left:26.5px;top:367.50px;width:3px;height:1px;background:#bbb"></div>
<svg class="ic" style="left:29px;top:363.50px" width="9" height="9" viewBox="0 0 9 9"><rect width="9" height="9" fill="#1f6f73"/><path d="M1 1l3 2-2 2 3 1M5 1l3 3-3 4M1 7l3 1" stroke="#d8f0ee" stroke-width="1" fill="none"/><rect x="5" y="5" width="3" height="3" fill="#0c3a40"/></svg>
<div class="t" style="left:38.50px;top:364.10px;font-size:7.8px;transform:scaleX(0.9388);">АРКА 2 Б1230_9</div>
<svg class="ic" style="left:20px;top:377.50px" width="6" height="6" viewBox="0 0 6 6"><rect x=".5" y=".5" width="5" height="5" fill="#fff" stroke="#707070" stroke-width="1"/><path d="M1.500 3h3" stroke="#111" stroke-width=".9"/><path d="M3 1.500v3" stroke="#111" stroke-width=".9"/></svg>
<div class="abs" style="left:26.5px;top:380.00px;width:3px;height:1px;background:#bbb"></div>
<svg class="ic" style="left:29px;top:376.00px" width="9" height="9" viewBox="0 0 9 9"><path d="M.5 5l2.500-2 2 .5v3l-2.500 2-2-.500z" fill="#1f6f73" stroke="#123" stroke-width=".8"/><path d="M4 2l2.500-1.500 2 .5v3L6.500 6l-2-.5z" fill="#2b8f88" stroke="#123" stroke-width=".8"/></svg>
<div class="t" style="left:38.50px;top:376.60px;font-size:7.8px;transform:scaleX(0.9039);">ПРОЛЕТ_9</div>
<svg class="ic" style="left:20px;top:390.00px" width="6" height="6" viewBox="0 0 6 6"><rect x=".5" y=".5" width="5" height="5" fill="#fff" stroke="#707070" stroke-width="1"/><path d="M1.500 3h3" stroke="#111" stroke-width=".9"/><path d="M3 1.500v3" stroke="#111" stroke-width=".9"/></svg>
<div class="abs" style="left:26.5px;top:392.50px;width:3px;height:1px;background:#bbb"></div>
<svg class="ic" style="left:29px;top:388.50px" width="9" height="9" viewBox="0 0 9 9"><path d="M.5 5l2.500-2 2 .5v3l-2.500 2-2-.500z" fill="#1f6f73" stroke="#123" stroke-width=".8"/><path d="M4 2l2.500-1.500 2 .5v3L6.500 6l-2-.5z" fill="#2b8f88" stroke="#123" stroke-width=".8"/></svg>
<div class="t" style="left:38.50px;top:389.10px;font-size:7.8px;transform:scaleX(0.9102);">ПРОЛЕТ_10</div>
<div class="abs" style="left:22.8px;top:123px;width:1px;height:270px;background:repeating-linear-gradient(180deg,#bdbdbd 0,#bdbdbd 1px,transparent 1px,transparent 2px)"></div>
<div class="abs" style="left:10px;top:516.5px;width:88px;height:14px;background:#c2c2c2"></div>
<svg class="ic" style="left:11.0px;top:518px" width="11" height="11" viewBox="0 0 10 10"><path d="M1 7l5-4 3 .5-5 4z" fill="#1f6f73" stroke="#123" stroke-width=".8"/></svg>
<svg class="ic" style="left:23.4px;top:518px" width="11" height="11" viewBox="0 0 10 10"><path d="M.5 6l3-2.500 2 .5v3l-3 2.500-2-.5z" fill="#1f6f73" stroke="#123" stroke-width=".8"/><path d="M4.500 3l3-2 2 .5v3l-3 2-2-.5z" fill="#2b8f88" stroke="#123" stroke-width=".8"/></svg>
<svg class="ic" style="left:35.8px;top:518px" width="11" height="11" viewBox="0 0 10 10"><path d="M1 3h3l1-1.500h4V9H1z" fill="#ddd" stroke="#333" stroke-width=".9"/><rect x="3" y="5" width="3" height="4" fill="#eee" stroke="#444" stroke-width=".6"/></svg>
<svg class="ic" style="left:48.2px;top:518px" width="11" height="11" viewBox="0 0 10 10"><rect x="2" y="1" width="6" height="8.500" rx="1" fill="#f2e21a" stroke="#886" stroke-width=".7"/><path d="M4 1v8.500M6 1v8.500" stroke="#a90" stroke-width=".6"/></svg>
<svg class="ic" style="left:60.6px;top:518px" width="11" height="11" viewBox="0 0 10 10"><path d="M5 0L10 5 5 10 0 5z" fill="#fff" stroke="#222" stroke-width=".9"/><path d="M2 5l3-2 3 2-3 1z" fill="#333"/></svg>
<svg class="ic" style="left:73.0px;top:518px" width="11" height="11" viewBox="0 0 10 10"><path d="M1 4l4-2 4 2v3L5 9 1 7z" fill="#1f6f73" stroke="#123" stroke-width=".7"/><path d="M2 1l5 8" stroke="#fe2" stroke-width="1.800"/></svg>
<svg class="ic" style="left:85.4px;top:518px" width="11" height="11" viewBox="0 0 10 10"><circle cx="5" cy="5" r="4" fill="#333"/><path d="M3 3h4v4H3z" fill="#1f8f6f"/><path d="M2 5h6M5 2v6" stroke="#fe2" stroke-width="1"/></svg>
<div id="ltb" class="abs"></div>
<div class="abs" style="left:107px;top:68px;width:1px;height:465px;background:#c8c8c8"></div>
<svg class="ic" style="left:111.8px;top:75.2px" width="8.600" height="8.600" viewBox="0 0 9 9"><rect width="9" height="9" fill="#6e6e6e"/><path d="M1 7l3.500-4 3.500 .5-4 4z" fill="#f4f4f4" stroke="#123" stroke-width=".6"/><rect x="5" y="5.500" width="3" height="2.500" fill="#1f6f73"/></svg>
<svg class="ic" style="left:111.8px;top:88.2px" width="8.600" height="8.600" viewBox="0 0 9 9"><rect width="9" height="9" fill="#164e52"/><path d="M1 6l3-3 3 1M2 2l2 1M5 6l3 2" stroke="#e8f4f2" stroke-width="1.100" fill="none"/><rect x="5.500" y="1" width="2.500" height="2.500" fill="#9cc"/></svg>
<svg class="ic" style="left:111.8px;top:101.4px" width="8.600" height="8.600" viewBox="0 0 9 9"><path d="M.5 1h8v7.500H6.500V5h-4v3.500H.5z" fill="#2c2c2c"/><path d="M1 2.500h7" stroke="#888" stroke-width=".8"/></svg>
<svg class="ic" style="left:111.8px;top:114.4px" width="8.600" height="8.600" viewBox="0 0 9 9"><rect x=".5" y=".5" width="8" height="8" fill="#d8d8e4" stroke="#555" stroke-width=".8"/><path d="M2 2.500h5M2 4.500h5M2 6.500h5" stroke="#55a" stroke-width="1" stroke-dasharray="1 1"/></svg>
<svg class="ic" style="left:111.8px;top:138.2px" width="8.600" height="8.600" viewBox="0 0 9 9"><path d="M1 7l3.500-4 3.500 .5-4 4z" fill="#e0e0e0" stroke="#234" stroke-width=".8"/><path d="M1 7.500l3 1 4-4.500" fill="none" stroke="#1f6f73" stroke-width="1"/><rect x="6.500" y="6.500" width="2" height="2" fill="#222"/></svg>
<svg class="ic" style="left:111.8px;top:150.7px" width="8.600" height="8.600" viewBox="0 0 9 9"><rect x=".5" y=".5" width="8" height="8" fill="#f4fbfb" stroke="#2a9a9a" stroke-width=".8"/><path d="M2 7V2l5 5zM2 5h3" fill="none" stroke="#222" stroke-width=".8"/><rect x="6.500" y="6.500" width="2" height="2" fill="#222"/></svg>
<svg class="ic" style="left:111.8px;top:163.7px" width="8.600" height="8.600" viewBox="0 0 9 9"><rect x=".5" y=".5" width="8" height="8" fill="#39b5b5" stroke="#176" stroke-width=".8"/><path d="M1 4.500h7M4.500 1v7" stroke="#fff" stroke-width=".9"/><rect x="5" y="5" width="2.500" height="2.500" fill="#1f6f73"/><rect x="6.500" y="6.500" width="2" height="2" fill="#222"/></svg>
<svg class="ic" style="left:111.8px;top:176.9px" width="8.600" height="8.600" viewBox="0 0 9 9"><path d="M1 2h5v6H1z" fill="#1f8f8f" stroke="#123" stroke-width=".7"/><path d="M5 1l3 1-3 6" fill="#eee" stroke="#333" stroke-width=".6"/><rect x="6.500" y="6.500" width="2" height="2" fill="#222"/></svg>
<svg class="ic" style="left:111.8px;top:190.7px" width="8.600" height="8.600" viewBox="0 0 9 9"><path d="M1 3l3-2v7l-3-1z" fill="#fff" stroke="#a22" stroke-width=".8"/><path d="M5 2h3v6H5" fill="none" stroke="#222" stroke-width=".9"/><path d="M3 5h4" stroke="#a22" stroke-width=".9"/></svg>
<svg class="ic" style="left:111.8px;top:203.2px" width="8.600" height="8.600" viewBox="0 0 9 9"><path d="M1 1v7h7z" fill="#1f6f73" stroke="#123" stroke-width=".7"/><path d="M4 1h4v4" fill="none" stroke="#333" stroke-width=".8"/><rect x="6.500" y="6.500" width="2" height="2" fill="#222"/></svg>
<svg class="ic" style="left:111.8px;top:216.2px" width="8.600" height="8.600" viewBox="0 0 9 9"><rect x="1" y="1" width="6" height="6.500" rx="1.500" fill="#fff" stroke="#a33" stroke-width=".9"/><circle cx="5" cy="5" r="2" fill="none" stroke="#a33" stroke-width=".8"/><path d="M3 8.500h5" stroke="#a33" stroke-width=".8"/></svg>
<svg class="ic" style="left:111.8px;top:229.4px" width="8.600" height="8.600" viewBox="0 0 9 9"><path d="M2 2h5M1.500 4h6" stroke="#a33" stroke-width="1"/><path d="M1 6h7v2.500H1z" fill="#333"/><path d="M6 1l2 1.500" stroke="#333" stroke-width=".9"/></svg>
<svg class="ic" style="left:111.8px;top:242.4px" width="8.600" height="8.600" viewBox="0 0 9 9"><path d="M1 8V3h2l1-2 2 1.500" fill="none" stroke="#222" stroke-width=".9"/><path d="M4 2l3 1 1 3-2 2" fill="#f80" stroke="#c40" stroke-width=".7"/><path d="M7 3v5" stroke="#222" stroke-width=".9"/></svg>
<svg class="ic" style="left:111.8px;top:255.7px" width="8.600" height="8.600" viewBox="0 0 9 9"><path d="M1 8l2-5 2 3 3-4v6z" fill="#1f6f73" stroke="#123" stroke-width=".7"/><path d="M3 2l4 1" stroke="#333" stroke-width=".9"/><rect x="6.500" y="6.500" width="2" height="2" fill="#222"/></svg>
<svg class="ic" style="left:111.8px;top:268.7px" width="8.600" height="8.600" viewBox="0 0 9 9"><path d="M3 3h5v5H3z" fill="#1f6f73" stroke="#123" stroke-width=".6"/><path d="M.5 1l6 6" stroke="#f2e21a" stroke-width="2.200"/><rect x="5.500" y="1.500" width="2.500" height="2.500" fill="#eee" stroke="#333" stroke-width=".5"/></svg>
<svg class="ic" style="left:111.8px;top:281.9px" width="8.600" height="8.600" viewBox="0 0 9 9"><path d="M1 4l3.500-2.500 3.500 2v3l-3.500 2-3.500-2z" fill="#f2f2f2" stroke="#333" stroke-width=".7"/><path d="M1 4l3.500 2 3.500-2.500M4.500 6v2.500" stroke="#333" stroke-width=".6" fill="none"/><path d="M2 7l5-4" stroke="#333" stroke-width=".6" stroke-dasharray="1 .8"/></svg>
<svg class="ic" style="left:111.8px;top:295.2px" width="8.600" height="8.600" viewBox="0 0 9 9"><path d="M1 3l1.500-1.500h5.500v5.500l-1.500 1.500h-5.500z" fill="#9a9a9a" stroke="#222" stroke-width=".8"/><path d="M1 3h5.500v5.500M6.500 3l1.500-1.500" fill="none" stroke="#222" stroke-width=".7"/></svg>
<svg class="ic" style="left:111.8px;top:331.9px" width="8.600" height="8.600" viewBox="0 0 9 9"><circle cx="3" cy="3" r="1.800" fill="#fff" stroke="#333" stroke-width=".8"/><circle cx="6" cy="3" r="1.800" fill="#fff" stroke="#333" stroke-width=".8"/><circle cx="4.500" cy="6" r="1.800" fill="#fff" stroke="#333" stroke-width=".8"/><rect x="6.500" y="6.500" width="2" height="2" fill="#222"/></svg>
<svg class="ic" style="left:111.8px;top:344.4px" width="8.600" height="8.600" viewBox="0 0 9 9"><path d="M1 2v5M8 2v5" stroke="#222" stroke-width=".9"/><rect x="3" y="1.500" width="3" height="6" fill="#c33" stroke="#711" stroke-width=".6"/><rect x="6.500" y="6.500" width="2" height="2" fill="#222"/></svg>
<svg class="ic" style="left:111.8px;top:356.9px" width="8.600" height="8.600" viewBox="0 0 9 9"><path d="M1 1l7 7M8 1L1 8" stroke="#222" stroke-width=".9"/><path d="M1 4.500h7" stroke="#2ab" stroke-width="1.600"/><path d="M1 2h7M1 7h7" stroke="#2ab" stroke-width=".7"/></svg>
<svg class="ic" style="left:111.8px;top:370.7px" width="8.600" height="8.600" viewBox="0 0 9 9"><path d="M1 1.500h4.500" stroke="#a22" stroke-width="1.300"/><path d="M2 3h2.500" stroke="#a22" stroke-width="1"/><path d="M4.500 4v3M3 6l1.500 2 1.500-2" stroke="#e22" stroke-width="1.100" fill="none"/><circle cx="7.500" cy="7.500" r="1" fill="#222"/></svg>
<svg class="ic" style="left:111.8px;top:383.7px" width="8.600" height="8.600" viewBox="0 0 9 9"><rect x=".5" y=".5" width="8" height="8" fill="#1f6f73" stroke="#123" stroke-width=".6"/><path d="M1 3h7M1 6h7" stroke="#bfe8e4" stroke-width="1" stroke-dasharray="1.500 .7"/></svg>
<svg class="ic" style="left:111.8px;top:396.9px" width="8.600" height="8.600" viewBox="0 0 9 9"><rect width="9" height="9" fill="#222"/><path d="M1 1h7v7z" fill="#2c4"/><path d="M1 1v7h7z" fill="#36f"/><path d="M1 8l3-4 4 4z" fill="#e3c"/><path d="M5 1h3v3z" fill="#fe2"/></svg>
<div class="abs" style="left:110.5px;top:71px;width:12px;height:1px;background:#b8b8b8;box-shadow:0 1px 0 #fff"></div>
<div class="abs" style="left:110.5px;top:130px;width:12px;height:1px;background:#b8b8b8;box-shadow:0 1px 0 #fff"></div>
<div class="abs" style="left:110.5px;top:134px;width:12px;height:1px;background:#b8b8b8;box-shadow:0 1px 0 #fff"></div>
<div class="abs" style="left:110.5px;top:311px;width:12px;height:1px;background:#b8b8b8;box-shadow:0 1px 0 #fff"></div>
<div class="abs" style="left:110.5px;top:315px;width:12px;height:1px;background:#b8b8b8;box-shadow:0 1px 0 #fff"></div>
<div class="abs" style="left:110.5px;top:323px;width:12px;height:1px;background:#b8b8b8;box-shadow:0 1px 0 #fff"></div>
<div class="abs" style="left:110.5px;top:327px;width:12px;height:1px;background:#b8b8b8;box-shadow:0 1px 0 #fff"></div>
<div class="abs" style="left:110px;top:410px;width:13.500px;height:1px;background:#c4c4c4"></div>
<div id="vp" class="abs"><svg width="846" height="450" viewBox="124 68 846 450" style="display:block">
<path d="M199.6 350.0L704.1 129.9M226.1 308.8L730.6 88.7M238.9 306.5L743.4 86.4M280.0 302.8L784.5 82.7M378.2 440.6L882.7 220.5M351.7 372.4L856.2 152.3M338.9 357.1L843.4 137.0M297.8 311.8L802.3 91.7" fill="none" stroke="#2e7d78" stroke-width="1.7" stroke-linecap="butt" stroke-linejoin="round"/>
<path d="M194.4 368.0L698.9 147.9M383.4 463.8L887.9 243.7" fill="none" stroke="#2e7d78" stroke-width="1.6" stroke-linecap="butt" stroke-linejoin="round"/>
<path d="M194.4 398.8L698.9 178.7" fill="none" stroke="#3f9e9a" stroke-width="1.9" stroke-linecap="butt" stroke-linejoin="round"/>
<path d="M383.4 494.6L887.9 274.5" fill="none" stroke="#3f9e9a" stroke-width="2.2" stroke-linecap="butt" stroke-linejoin="round"/>
<path d="M288.9 304.8L793.4 84.7" fill="none" stroke="#2e7d78" stroke-width="1.0" stroke-linecap="butt" stroke-linejoin="round"/>
<path d="M194.4 397.2L698.9 177.1M383.4 493.0L887.9 272.9" fill="none" stroke="#1d5c5a" stroke-width="0.8" stroke-linecap="butt" stroke-linejoin="round"/>
<path d="M212.0 330.7L251.3 297.8L262.4 308.7L224.8 339.0L212.0 330.7M262.4 308.7L301.8 275.8L312.9 286.7L275.3 317.0L262.4 308.7M312.9 286.7L352.2 253.7L363.3 264.7L325.7 295.0L312.9 286.7M363.3 264.7L402.7 231.7L413.8 242.7L376.2 273.0L363.3 264.7M413.8 242.7L453.1 209.7L464.2 220.7L426.6 251.0L413.8 242.7M464.2 220.7L503.6 187.7L514.7 198.6L477.1 229.0L464.2 220.7M514.7 198.6L554.0 165.7L565.1 176.6L527.5 207.0L514.7 198.6M565.1 176.6L604.5 143.7L615.6 154.6L578.0 185.0L565.1 176.6M615.6 154.6L654.9 121.7L666.0 132.6L628.4 162.9L615.6 154.6M666.0 132.6L705.4 99.7L716.5 110.6L678.9 140.9L666.0 132.6M259.4 304.6L305.2 291.8L309.9 282.6L264.1 295.4L259.4 304.6M309.9 282.6L355.7 269.8L360.3 260.6L314.6 273.4L309.9 282.6M360.3 260.6L406.1 247.8L410.8 238.6L365.0 251.4L360.3 260.6M410.8 238.6L456.6 225.8L461.2 216.6L415.5 229.4L410.8 238.6M461.2 216.6L507.0 203.7L511.7 194.6L465.9 207.4L461.2 216.6M511.7 194.6L557.5 181.7L562.1 172.6L516.4 185.4L511.7 194.6M562.1 172.6L607.9 159.7L612.6 150.5L566.8 163.4L562.1 172.6M612.6 150.5L658.4 137.7L663.0 128.5L617.3 141.4L612.6 150.5M663.0 128.5L708.8 115.7L713.5 106.5L667.7 119.4L663.0 128.5M713.5 106.5L759.3 93.7L763.9 84.5L718.2 97.4L713.5 106.5M365.8 408.7L376.9 361.4L416.3 386.7L403.4 429.6L365.8 408.7M416.3 386.7L427.4 339.4L466.7 364.7L453.9 407.6L416.3 386.7M466.7 364.7L477.8 317.4L517.2 342.7L504.3 385.5L466.7 364.7M517.2 342.7L528.3 295.4L567.6 320.7L554.8 363.5L517.2 342.7M567.6 320.7L578.7 273.4L618.1 298.6L605.2 341.5L567.6 320.7M618.1 298.6L629.2 251.4L668.5 276.6L655.7 319.5L618.1 298.6M668.5 276.6L679.6 229.4L719.0 254.6L706.1 297.5L668.5 276.6M719.0 254.6L730.1 207.4L769.4 232.6L756.6 275.5L719.0 254.6M769.4 232.6L780.5 185.3L819.9 210.6L807.0 253.5L769.4 232.6M819.9 210.6L831.0 163.3L870.3 188.6L857.5 231.5L819.9 210.6M318.4 334.5L323.0 300.8L368.8 312.5L364.1 346.1L318.4 334.5M368.8 312.5L373.5 278.8L419.3 290.5L414.6 324.1L368.8 312.5M419.3 290.5L423.9 256.8L469.7 268.5L465.0 302.1L419.3 290.5M469.7 268.5L474.4 234.8L520.2 246.4L515.5 280.1L469.7 268.5M520.2 246.4L524.8 212.8L570.6 224.4L565.9 258.1L520.2 246.4M570.6 224.4L575.3 190.8L621.1 202.4L616.4 236.1L570.6 224.4M621.1 202.4L625.7 168.7L671.5 180.4L666.8 214.1L621.1 202.4M671.5 180.4L676.2 146.7L722.0 158.4L717.3 192.1L671.5 180.4M722.0 158.4L726.6 124.7L772.4 136.4L767.7 170.1L722.0 158.4M772.4 136.4L777.1 102.7L822.9 114.4L818.2 148.1L772.4 136.4" fill="none" stroke="#7b72dc" stroke-width="1.8" stroke-linecap="butt" stroke-linejoin="round"/>
<path d="M194.4 398.3L219.6 357.0M244.9 376.3L270.1 335.0L295.3 354.3M295.3 354.3L320.5 313.0L345.8 332.3M345.8 332.3L371.0 291.0L396.2 310.3M396.2 310.3L421.4 269.0L446.6 288.2M446.6 288.2L471.9 246.9L497.1 266.2M497.1 266.2L522.3 224.9L547.6 244.2M547.6 244.2L572.8 202.9L598.0 222.2M598.0 222.2L623.2 180.9L648.5 200.2M648.5 200.2L673.7 158.9L698.9 178.2M408.6 452.8L433.8 472.1M433.8 472.1L459.1 430.8L484.3 450.1M484.3 450.1L509.5 408.8L534.8 428.1M534.8 428.1L560.0 386.8L585.2 406.1M585.2 406.1L610.4 364.8L635.6 384.1M635.6 384.1L660.9 342.7L686.1 362.0M686.1 362.0L711.3 320.7L736.5 340.0M736.5 340.0L761.8 298.7L787.0 318.0M787.0 318.0L812.2 276.7L837.5 296.0M837.5 296.0L862.7 254.7L887.9 274.0" fill="none" stroke="#7b72dc" stroke-width="1.6" stroke-linecap="butt" stroke-linejoin="round"/>
<path d="M219.6 357.0L244.9 376.3M383.4 494.1L408.6 452.8" fill="none" stroke="#cfc8f0" stroke-width="1.6" stroke-linecap="butt" stroke-linejoin="round"/>
<path d="M243.5 377.4L243.5 335.4L246.2 334.2L246.2 376.2ZM243.5 335.4L279.5 283.3L282.2 282.1L246.2 334.2ZM280.0 283.0L336.5 282.1L338.2 281.4L281.7 282.3ZM336.5 282.1L340.5 284.2L342.2 283.5L338.2 281.4ZM340.5 284.2L397.0 342.3L398.7 341.6L342.2 283.5ZM396.5 342.6L432.5 431.2L435.2 430.0L399.2 341.4ZM432.5 431.2L432.5 473.2L435.2 472.0L435.2 430.0ZM294.0 355.4L294.0 313.4L296.6 312.2L296.6 354.2ZM294.0 313.4L330.0 261.3L332.6 260.1L296.6 312.2ZM330.5 261.0L387.0 260.1L388.6 259.4L332.1 260.3ZM387.0 260.1L391.0 262.2L392.6 261.4L388.6 259.4ZM391.0 262.2L447.5 320.3L449.1 319.6L392.6 261.4ZM447.0 320.6L483.0 409.2L485.6 408.0L449.6 319.4ZM483.0 409.2L483.0 451.2L485.6 450.0L485.6 408.0ZM344.4 333.3L344.4 291.3L347.1 290.2L347.1 332.2ZM344.4 291.3L380.4 239.2L383.1 238.1L347.1 290.2ZM380.9 239.0L437.4 238.1L439.1 237.4L382.6 238.3ZM437.4 238.1L441.4 240.1L443.1 239.4L439.1 237.4ZM441.4 240.1L497.9 298.3L499.6 297.6L443.1 239.4ZM497.4 298.5L533.4 387.1L536.1 386.0L500.1 297.4ZM533.4 387.1L533.4 429.1L536.1 428.0L536.1 386.0ZM394.9 311.3L394.9 269.3L397.5 268.2L397.5 310.2ZM394.9 269.3L430.9 217.2L433.5 216.1L397.5 268.2ZM431.4 217.0L487.9 216.1L489.5 215.4L433.0 216.3ZM487.9 216.1L491.9 218.1L493.5 217.4L489.5 215.4ZM491.9 218.1L548.4 276.3L550.0 275.6L493.5 217.4ZM547.9 276.5L583.9 365.1L586.5 364.0L550.5 275.4ZM583.9 365.1L583.9 407.1L586.5 406.0L586.5 364.0ZM445.3 289.3L445.3 247.3L448.0 246.2L448.0 288.2ZM445.3 247.3L481.3 195.2L484.0 194.1L448.0 246.2ZM481.8 195.0L538.3 194.1L540.0 193.4L483.5 194.3ZM538.3 194.1L542.3 196.1L544.0 195.4L540.0 193.4ZM542.3 196.1L598.8 254.3L600.5 253.6L544.0 195.4ZM598.3 254.5L634.3 343.1L637.0 342.0L601.0 253.4ZM634.3 343.1L634.3 385.1L637.0 384.0L637.0 342.0ZM495.8 267.3L495.8 225.3L498.4 224.2L498.4 266.2ZM495.8 225.3L531.8 173.2L534.4 172.1L498.4 224.2ZM532.3 173.0L588.8 172.1L590.4 171.4L533.9 172.3ZM588.8 172.1L592.8 174.1L594.4 173.4L590.4 171.4ZM592.8 174.1L649.3 232.3L650.9 231.6L594.4 173.4ZM648.8 232.5L684.8 321.1L687.4 320.0L651.4 231.4ZM684.8 321.1L684.8 363.1L687.4 362.0L687.4 320.0ZM546.2 245.3L546.2 203.3L548.9 202.2L548.9 244.2ZM546.2 203.3L582.2 151.2L584.9 150.1L548.9 202.2ZM582.7 151.0L639.2 150.1L640.9 149.4L584.4 150.3ZM639.2 150.1L643.2 152.1L644.9 151.4L640.9 149.4ZM643.2 152.1L699.7 210.3L701.4 209.6L644.9 151.4ZM699.2 210.5L735.2 299.1L737.9 298.0L701.9 209.4ZM735.2 299.1L735.2 341.1L737.9 340.0L737.9 298.0ZM596.7 223.3L596.7 181.3L599.3 180.1L599.3 222.1ZM596.7 181.3L632.7 129.2L635.3 128.0L599.3 180.1ZM633.2 129.0L689.7 128.1L691.3 127.3L634.8 128.3ZM689.7 128.1L693.7 130.1L695.3 129.4L691.3 127.3ZM693.7 130.1L750.2 188.3L751.8 187.6L695.3 129.4ZM749.7 188.5L785.7 277.1L788.3 275.9L752.3 187.3ZM785.7 277.1L785.7 319.1L788.3 317.9L788.3 275.9ZM647.1 201.3L647.1 159.3L649.8 158.1L649.8 200.1ZM647.1 159.3L683.1 107.2L685.8 106.0L649.8 158.1ZM683.6 107.0L740.1 106.0L741.8 105.3L685.3 106.3ZM740.1 106.0L744.1 108.1L745.8 107.4L741.8 105.3ZM744.1 108.1L800.6 166.3L802.3 165.6L745.8 107.4ZM800.1 166.5L836.1 255.1L838.8 253.9L802.8 165.3ZM836.1 255.1L836.1 297.1L838.8 295.9L838.8 253.9Z" fill="#276a66" stroke="#276a66" stroke-width=".3"/>
<path d="M193.1 399.4L193.1 357.4L195.7 356.2L195.7 398.2ZM193.1 357.4L229.1 305.3L231.7 304.1L195.7 356.2ZM229.6 305.1L286.1 304.1L287.7 303.4L231.2 304.3ZM286.1 304.1L290.1 306.2L291.7 305.5L287.7 303.4ZM290.1 306.2L346.6 364.4L348.2 363.6L291.7 305.5ZM346.1 364.6L382.1 453.2L384.7 452.0L348.7 363.4ZM382.1 453.2L382.1 495.2L384.7 494.0L384.7 452.0ZM697.6 179.3L697.6 137.3L700.2 136.1L700.2 178.1ZM697.6 137.3L733.6 85.2L736.2 84.0L700.2 136.1ZM734.1 85.0L790.6 84.0L792.2 83.3L735.7 84.2ZM790.6 84.0L794.6 86.1L796.2 85.4L792.2 83.3ZM794.6 86.1L851.1 144.3L852.7 143.5L796.2 85.4ZM850.6 144.5L886.6 233.1L889.2 231.9L853.2 143.3ZM886.6 233.1L886.6 275.1L889.2 273.9L889.2 231.9Z" fill="#0e2a29" stroke="none"/>
<path d="M193.1 399.4L193.1 357.4M195.7 398.2L195.7 356.2M193.1 357.4L229.1 305.3M195.7 356.2L231.7 304.1M229.6 305.1L286.1 304.1M231.2 304.3L287.7 303.4M286.1 304.1L290.1 306.2M287.7 303.4L291.7 305.5M290.1 306.2L346.6 364.4M291.7 305.5L348.2 363.6M346.1 364.6L382.1 453.2M348.7 363.4L384.7 452.0M382.1 453.2L382.1 495.2M384.7 452.0L384.7 494.0M243.5 377.4L243.5 335.4M246.2 376.2L246.2 334.2M243.5 335.4L279.5 283.3M246.2 334.2L282.2 282.1M280.0 283.0L336.5 282.1M281.7 282.3L338.2 281.4M336.5 282.1L340.5 284.2M338.2 281.4L342.2 283.5M340.5 284.2L397.0 342.3M342.2 283.5L398.7 341.6M396.5 342.6L432.5 431.2M399.2 341.4L435.2 430.0M432.5 431.2L432.5 473.2M435.2 430.0L435.2 472.0M294.0 355.4L294.0 313.4M296.6 354.2L296.6 312.2M294.0 313.4L330.0 261.3M296.6 312.2L332.6 260.1M330.5 261.0L387.0 260.1M332.1 260.3L388.6 259.4M387.0 260.1L391.0 262.2M388.6 259.4L392.6 261.4M391.0 262.2L447.5 320.3M392.6 261.4L449.1 319.6M447.0 320.6L483.0 409.2M449.6 319.4L485.6 408.0M483.0 409.2L483.0 451.2M485.6 408.0L485.6 450.0M344.4 333.3L344.4 291.3M347.1 332.2L347.1 290.2M344.4 291.3L380.4 239.2M347.1 290.2L383.1 238.1M380.9 239.0L437.4 238.1M382.6 238.3L439.1 237.4M437.4 238.1L441.4 240.1M439.1 237.4L443.1 239.4M441.4 240.1L497.9 298.3M443.1 239.4L499.6 297.6M497.4 298.5L533.4 387.1M500.1 297.4L536.1 386.0M533.4 387.1L533.4 429.1M536.1 386.0L536.1 428.0M394.9 311.3L394.9 269.3M397.5 310.2L397.5 268.2M394.9 269.3L430.9 217.2M397.5 268.2L433.5 216.1M431.4 217.0L487.9 216.1M433.0 216.3L489.5 215.4M487.9 216.1L491.9 218.1M489.5 215.4L493.5 217.4M491.9 218.1L548.4 276.3M493.5 217.4L550.0 275.6M547.9 276.5L583.9 365.1M550.5 275.4L586.5 364.0M583.9 365.1L583.9 407.1M586.5 364.0L586.5 406.0M445.3 289.3L445.3 247.3M448.0 288.2L448.0 246.2M445.3 247.3L481.3 195.2M448.0 246.2L484.0 194.1M481.8 195.0L538.3 194.1M483.5 194.3L540.0 193.4M538.3 194.1L542.3 196.1M540.0 193.4L544.0 195.4M542.3 196.1L598.8 254.3M544.0 195.4L600.5 253.6M598.3 254.5L634.3 343.1M601.0 253.4L637.0 342.0M634.3 343.1L634.3 385.1M637.0 342.0L637.0 384.0M495.8 267.3L495.8 225.3M498.4 266.2L498.4 224.2M495.8 225.3L531.8 173.2M498.4 224.2L534.4 172.1M532.3 173.0L588.8 172.1M533.9 172.3L590.4 171.4M588.8 172.1L592.8 174.1M590.4 171.4L594.4 173.4M592.8 174.1L649.3 232.3M594.4 173.4L650.9 231.6M648.8 232.5L684.8 321.1M651.4 231.4L687.4 320.0M684.8 321.1L684.8 363.1M687.4 320.0L687.4 362.0M546.2 245.3L546.2 203.3M548.9 244.2L548.9 202.2M546.2 203.3L582.2 151.2M548.9 202.2L584.9 150.1M582.7 151.0L639.2 150.1M584.4 150.3L640.9 149.4M639.2 150.1L643.2 152.1M640.9 149.4L644.9 151.4M643.2 152.1L699.7 210.3M644.9 151.4L701.4 209.6M699.2 210.5L735.2 299.1M701.9 209.4L737.9 298.0M735.2 299.1L735.2 341.1M737.9 298.0L737.9 340.0M596.7 223.3L596.7 181.3M599.3 222.1L599.3 180.1M596.7 181.3L632.7 129.2M599.3 180.1L635.3 128.0M633.2 129.0L689.7 128.1M634.8 128.3L691.3 127.3M689.7 128.1L693.7 130.1M691.3 127.3L695.3 129.4M693.7 130.1L750.2 188.3M695.3 129.4L751.8 187.6M749.7 188.5L785.7 277.1M752.3 187.3L788.3 275.9M785.7 277.1L785.7 319.1M788.3 275.9L788.3 317.9M647.1 201.3L647.1 159.3M649.8 200.1L649.8 158.1M647.1 159.3L683.1 107.2M649.8 158.1L685.8 106.0M683.6 107.0L740.1 106.0M685.3 106.3L741.8 105.3M740.1 106.0L744.1 108.1M741.8 105.3L745.8 107.4M744.1 108.1L800.6 166.3M745.8 107.4L802.3 165.6M800.1 166.5L836.1 255.1M802.8 165.3L838.8 253.9M836.1 255.1L836.1 297.1M838.8 253.9L838.8 295.9M697.6 179.3L697.6 137.3M700.2 178.1L700.2 136.1M697.6 137.3L733.6 85.2M700.2 136.1L736.2 84.0M734.1 85.0L790.6 84.0M735.7 84.2L792.2 83.3M790.6 84.0L794.6 86.1M792.2 83.3L796.2 85.4M794.6 86.1L851.1 144.3M796.2 85.4L852.7 143.5M850.6 144.5L886.6 233.1M853.2 143.3L889.2 231.9M886.6 233.1L886.6 275.1M889.2 231.9L889.2 273.9" fill="none" stroke="#2f7f7a" stroke-width="0.75" stroke-linecap="butt" stroke-linejoin="round"/>
<path d="M193.1 399.4L193.1 403.9M195.7 398.2L195.7 402.7M382.1 495.2L382.1 499.7M384.7 494.0L384.7 498.5" fill="none" stroke="#2f7f7a" stroke-width="0.8" stroke-linecap="butt" stroke-linejoin="round"/>
<path d="M191.8 401.0L197.0 401.0M380.8 496.8L386.0 496.8M242.3 379.0L247.5 379.0M431.2 474.8L436.4 474.8M292.7 357.0L297.9 357.0M481.7 452.8L486.9 452.8M343.1 335.0L348.4 335.0M532.1 430.8L537.4 430.8M393.6 313.0L398.8 313.0M582.6 408.8L587.8 408.8M444.0 290.9L449.2 290.9M633.0 386.8L638.2 386.8M494.5 268.9L499.7 268.9M683.5 364.7L688.7 364.7M545.0 246.9L550.2 246.9M733.9 342.7L739.1 342.7M595.4 224.9L600.6 224.9M784.4 320.7L789.6 320.7M645.9 202.9L651.1 202.9M834.9 298.7L840.1 298.7M696.3 180.9L701.5 180.9M885.3 276.7L890.5 276.7" fill="none" stroke="#2f7f7a" stroke-width="2.4" stroke-linecap="butt" stroke-linejoin="round"/>
<path d="M192.0 402.4L196.8 402.4M381.0 498.2L385.8 498.2M242.5 380.4L247.3 380.4M431.4 476.2L436.2 476.2M292.9 358.4L297.7 358.4M481.9 454.2L486.7 454.2M343.4 336.4L348.1 336.4M532.4 432.2L537.1 432.2M393.8 314.4L398.6 314.4M582.8 410.2L587.6 410.2M444.2 292.4L449.0 292.4M633.2 388.2L638.0 388.2M494.7 270.3L499.5 270.3M683.7 366.1L688.5 366.1M545.2 248.3L550.0 248.3M734.1 344.1L738.9 344.1M595.6 226.3L600.4 226.3M784.6 322.1L789.4 322.1M646.1 204.3L650.9 204.3M835.1 300.1L839.9 300.1M696.5 182.3L701.3 182.3M885.5 278.1L890.3 278.1" fill="none" stroke="#d2622a" stroke-width="1.0" stroke-opacity="0.8" stroke-linecap="butt" stroke-linejoin="round"/>
<path d="M345.6 365.4L349.2 362.6M228.6 306.1L232.2 303.3M396.0 343.4L399.6 340.6M279.1 284.1L282.7 281.3M446.5 321.4L450.1 318.6M329.5 262.1L333.1 259.3M496.9 299.4L500.5 296.6M380.0 240.1L383.6 237.3M547.4 277.4L551.0 274.6M430.4 218.1L434.0 215.3M597.8 255.4L601.4 252.6M480.9 196.0L484.5 193.2M648.3 233.3L651.9 230.5M531.3 174.0L534.9 171.2M698.7 211.3L702.3 208.5M581.8 152.0L585.4 149.2M749.2 189.3L752.8 186.5M632.2 130.0L635.8 127.2M799.6 167.3L803.2 164.5M682.7 108.0L686.3 105.2M850.1 145.3L853.7 142.5M733.1 86.0L736.7 83.2" fill="none" stroke="#9a5ce0" stroke-width="1.5" stroke-linecap="butt" stroke-linejoin="round"/>
<path d="M380.8 452.6L386.0 452.6M191.8 356.8L197.0 356.8M431.2 430.6L436.4 430.6M242.3 334.8L247.5 334.8M481.7 408.6L486.9 408.6M292.7 312.8L297.9 312.8M532.1 386.6L537.4 386.6M343.1 290.8L348.4 290.8M582.6 364.6L587.8 364.6M393.6 268.8L398.8 268.8M633.0 342.6L638.2 342.6M444.0 246.8L449.2 246.8M683.5 320.5L688.7 320.5M494.5 224.7L499.7 224.7M733.9 298.5L739.1 298.5M545.0 202.7L550.2 202.7M784.4 276.5L789.6 276.5M595.4 180.7L600.6 180.7M834.9 254.5L840.1 254.5M645.9 158.7L651.1 158.7M885.3 232.5L890.5 232.5M696.3 136.7L701.5 136.7" fill="none" stroke="#b455d6" stroke-width="1.3" stroke-linecap="butt" stroke-linejoin="round"/>
<path d="M256.4 430.2L256.4 312.7M321.8 463.4L321.8 345.9M508.6 320.2L508.6 202.7M574.0 353.3L574.0 235.8M760.9 210.1L760.9 92.6M826.3 243.3L826.3 125.8" fill="none" stroke="#2a3012" stroke-width="1.8" stroke-linecap="butt" stroke-linejoin="round"/>
<path d="M255.2 430.2L255.2 312.7M257.6 430.2L257.6 312.7M320.6 463.4L320.6 345.9M323.0 463.4L323.0 345.9M507.4 320.2L507.4 202.7M509.8 320.2L509.8 202.7M572.8 353.3L572.8 235.8M575.2 353.3L575.2 235.8M759.7 210.1L759.7 92.6M762.1 210.1L762.1 92.6M825.1 243.3L825.1 125.8M827.5 243.3L827.5 125.8" fill="none" stroke="#66732e" stroke-width="0.7" stroke-linecap="butt" stroke-linejoin="round"/>
<path d="M253.9 430.7L258.9 430.7M319.3 463.9L324.3 463.9M506.1 320.7L511.1 320.7M571.5 353.8L576.5 353.8M758.4 210.6L763.4 210.6M823.8 243.8L828.8 243.8" fill="none" stroke="#e07a5a" stroke-width="1.4" stroke-linecap="butt" stroke-linejoin="round"/>
<path d="M256.4 317.2L321.8 350.4M508.6 207.2L574.0 240.3M760.9 97.1L826.3 130.3" fill="none" stroke="#6a10c8" stroke-width="2.3" stroke-linecap="butt" stroke-linejoin="round"/>
<path d="M321.8 388.4L365.8 408.7M256.4 355.2L212.0 330.7M574.0 278.3L618.1 298.6M508.6 245.2L464.2 220.7M826.3 168.3L870.3 188.6M760.9 135.1L716.5 110.6" fill="none" stroke="#14a566" stroke-width="2.0" stroke-linecap="butt" stroke-linejoin="round"/>
<path d="M321.8 463.4L383.4 494.6M256.4 430.2L194.4 398.8M826.3 243.3L887.9 274.5M760.9 210.1L698.9 178.7" fill="none" stroke="#3f9e9a" stroke-width="2.2" stroke-linecap="butt" stroke-linejoin="round"/>
<path d="M256.4 340.2L321.8 373.4M256.4 337.2L321.8 370.4M760.9 120.1L826.3 153.3M760.9 117.1L826.3 150.3M433.8 430.6L383.4 492.6" fill="none" stroke="#2e7d78" stroke-width="1.0" stroke-linecap="butt" stroke-linejoin="round"/>
<path d="M256.4 331.2L321.8 364.4M760.9 111.1L826.3 144.3" fill="none" stroke="#2e7d78" stroke-width="0.8" stroke-linecap="butt" stroke-linejoin="round"/>
<path d="M837.5 254.5L887.9 272.5" fill="none" stroke="#3f9e9a" stroke-width="2.4" stroke-linecap="butt" stroke-linejoin="round"/>
<path d="M648.5 158.7L698.9 176.7M244.9 334.8L194.4 396.8" fill="none" stroke="#3f9e9a" stroke-width="2.0" stroke-linecap="butt" stroke-linejoin="round"/>
<path d="M522.2 248.1L574.0 274.3" fill="none" stroke="#6a10c8" stroke-width="1.8" stroke-linecap="butt" stroke-linejoin="round"/>
<path d="M321.8 343.4L321.8 349.9M574.0 233.3L574.0 239.8M760.9 90.1L760.9 96.6" fill="none" stroke="#ff2a2a" stroke-width="2.0" stroke-linecap="butt" stroke-linejoin="round"/>
<path d="M261.6 335.9L261.6 340.4M278.0 344.2L278.0 348.7M296.9 353.8L296.9 358.3M315.2 363.1L315.2 367.6M766.1 115.8L766.1 120.3M782.5 124.1L782.5 128.6M801.4 133.7L801.4 138.2M819.7 143.0L819.7 147.5" fill="none" stroke="#6aa0ff" stroke-width="1.4" stroke-linecap="butt" stroke-linejoin="round"/>
<path d="M261.6 334.6L261.6 336.1M278.0 342.9L278.0 344.4M296.9 352.5L296.9 354.0M315.2 361.8L315.2 363.3M766.1 114.5L766.1 116.0M782.5 122.8L782.5 124.3M801.4 132.4L801.4 133.9M819.7 141.7L819.7 143.2" fill="none" stroke="#ff5040" stroke-width="1.4" stroke-linecap="butt" stroke-linejoin="round"/>
<path d="M506.8 281.6L571.4 309.0" fill="none" stroke="#1c1cd8" stroke-width="2.0" stroke-linecap="butt" stroke-linejoin="round"/>
<path d="M533.0 284.0L533.0 334.0M549.0 294.0L549.0 341.0" fill="none" stroke="#1c1cd8" stroke-width="1.8" stroke-linecap="butt" stroke-linejoin="round"/>
<path d="M365.8 408.7L376.9 361.4" fill="none" stroke="#cfc8f0" stroke-width="1.5" stroke-linecap="butt" stroke-linejoin="round"/>
<path d="M532.2 334.5L533.8 334.5M548.2 342.0L549.8 342.0" fill="none" stroke="#e8e8e8" stroke-width="1.6" stroke-linecap="butt" stroke-linejoin="round"/>
<path d="M242.8 333.5L339.5 291.5L339.5 382.0L242.8 424.0L242.8 333.5M747.5 109.7L842.0 69.5L842.0 157.0L747.5 200.0L747.5 109.7" fill="none" stroke="#d0d0d0" stroke-width="0.9" stroke-linecap="butt" stroke-linejoin="round"/>
<path d="M252.4 301.6L264.0 309.3" fill="none" stroke="#d0d0d0" stroke-width="1.2" stroke-linecap="butt" stroke-linejoin="round"/>
<path d="M194.4 356.8L306.8 406.2M212.0 330.7L301.6 345.5M230.3 305.0L320.4 315.1M213.3 338.4L339.3 283.7M383.4 452.6L433.8 472.6M383.4 494.6L433.8 430.6M433.8 430.6L356.9 386.2M414.9 383.0L330.5 367.8M230.4 304.7L374.0 279.5M292.1 282.7L299.0 301.3M388.4 472.4L433.8 464.6M256.8 320.4L368.3 309.9M339.3 282.8L448.4 320.4M490.7 216.8L509.0 201.4" fill="none" stroke="#3aa028" stroke-width="0.8" stroke-linecap="butt" stroke-linejoin="round"/>
<path d="M321.8 430.5L383.4 463.0L383.4 464.6L321.8 434.7ZM256.4 397.3L194.4 367.2L194.4 368.8L256.4 401.5ZM574.0 320.4L635.6 352.9L635.6 354.6L574.0 324.6ZM508.6 287.3L446.6 257.1L446.6 258.8L508.6 291.5ZM826.3 210.4L887.9 242.9L887.9 244.5L826.3 214.6ZM760.9 177.2L698.9 147.1L698.9 148.7L760.9 181.4Z" fill="#7b72dc"/>
<path d="M211.1 329.8h1.8v1.8h-1.8zM250.4 296.9h1.8v1.8h-1.8zM223.9 338.1h1.8v1.8h-1.8zM261.5 307.8h1.8v1.8h-1.8zM300.9 274.9h1.8v1.8h-1.8zM274.4 316.1h1.8v1.8h-1.8zM312.0 285.8h1.8v1.8h-1.8zM351.3 252.8h1.8v1.8h-1.8zM324.8 294.1h1.8v1.8h-1.8zM362.4 263.8h1.8v1.8h-1.8zM401.8 230.8h1.8v1.8h-1.8zM375.3 272.1h1.8v1.8h-1.8zM412.9 241.8h1.8v1.8h-1.8zM452.2 208.8h1.8v1.8h-1.8zM425.7 250.1h1.8v1.8h-1.8zM463.3 219.8h1.8v1.8h-1.8zM502.7 186.8h1.8v1.8h-1.8zM476.2 228.1h1.8v1.8h-1.8zM513.8 197.7h1.8v1.8h-1.8zM553.1 164.8h1.8v1.8h-1.8zM526.6 206.1h1.8v1.8h-1.8zM564.2 175.7h1.8v1.8h-1.8zM603.6 142.8h1.8v1.8h-1.8zM577.1 184.1h1.8v1.8h-1.8zM614.7 153.7h1.8v1.8h-1.8zM654.0 120.8h1.8v1.8h-1.8zM627.5 162.0h1.8v1.8h-1.8zM665.1 131.7h1.8v1.8h-1.8zM704.5 98.8h1.8v1.8h-1.8zM678.0 140.0h1.8v1.8h-1.8zM715.6 109.7h1.8v1.8h-1.8zM258.5 303.7h1.8v1.8h-1.8zM304.3 290.9h1.8v1.8h-1.8zM263.2 294.5h1.8v1.8h-1.8zM309.0 281.7h1.8v1.8h-1.8zM354.8 268.9h1.8v1.8h-1.8zM313.7 272.5h1.8v1.8h-1.8zM359.4 259.7h1.8v1.8h-1.8zM405.2 246.9h1.8v1.8h-1.8zM364.1 250.5h1.8v1.8h-1.8zM409.9 237.7h1.8v1.8h-1.8zM455.7 224.9h1.8v1.8h-1.8zM414.6 228.5h1.8v1.8h-1.8zM460.3 215.7h1.8v1.8h-1.8zM506.1 202.8h1.8v1.8h-1.8zM465.0 206.5h1.8v1.8h-1.8zM510.8 193.7h1.8v1.8h-1.8zM556.6 180.8h1.8v1.8h-1.8zM515.5 184.5h1.8v1.8h-1.8zM561.2 171.7h1.8v1.8h-1.8zM607.0 158.8h1.8v1.8h-1.8zM565.9 162.5h1.8v1.8h-1.8zM611.7 149.6h1.8v1.8h-1.8zM657.5 136.8h1.8v1.8h-1.8zM616.4 140.5h1.8v1.8h-1.8zM662.1 127.6h1.8v1.8h-1.8zM707.9 114.8h1.8v1.8h-1.8zM666.8 118.5h1.8v1.8h-1.8zM712.6 105.6h1.8v1.8h-1.8zM758.4 92.8h1.8v1.8h-1.8zM717.3 96.5h1.8v1.8h-1.8zM763.0 83.6h1.8v1.8h-1.8zM218.7 356.1h1.8v1.8h-1.8zM269.2 334.1h1.8v1.8h-1.8zM319.6 312.1h1.8v1.8h-1.8zM370.1 290.1h1.8v1.8h-1.8zM420.5 268.1h1.8v1.8h-1.8zM471.0 246.0h1.8v1.8h-1.8zM521.4 224.0h1.8v1.8h-1.8zM571.9 202.0h1.8v1.8h-1.8zM622.3 180.0h1.8v1.8h-1.8zM672.8 158.0h1.8v1.8h-1.8zM364.9 407.8h1.8v1.8h-1.8zM376.0 360.5h1.8v1.8h-1.8zM402.5 428.7h1.8v1.8h-1.8zM415.4 385.8h1.8v1.8h-1.8zM426.5 338.5h1.8v1.8h-1.8zM453.0 406.7h1.8v1.8h-1.8zM465.8 363.8h1.8v1.8h-1.8zM476.9 316.5h1.8v1.8h-1.8zM503.4 384.6h1.8v1.8h-1.8zM516.3 341.8h1.8v1.8h-1.8zM527.4 294.5h1.8v1.8h-1.8zM553.9 362.6h1.8v1.8h-1.8zM566.7 319.8h1.8v1.8h-1.8zM577.8 272.5h1.8v1.8h-1.8zM604.3 340.6h1.8v1.8h-1.8zM617.2 297.7h1.8v1.8h-1.8zM628.3 250.5h1.8v1.8h-1.8zM654.8 318.6h1.8v1.8h-1.8zM667.6 275.7h1.8v1.8h-1.8zM678.7 228.5h1.8v1.8h-1.8zM705.2 296.6h1.8v1.8h-1.8zM718.1 253.7h1.8v1.8h-1.8zM729.2 206.5h1.8v1.8h-1.8zM755.7 274.6h1.8v1.8h-1.8zM768.5 231.7h1.8v1.8h-1.8zM779.6 184.4h1.8v1.8h-1.8zM806.1 252.6h1.8v1.8h-1.8zM819.0 209.7h1.8v1.8h-1.8zM830.1 162.4h1.8v1.8h-1.8zM856.6 230.6h1.8v1.8h-1.8zM869.4 187.7h1.8v1.8h-1.8zM317.5 333.6h1.8v1.8h-1.8zM322.1 299.9h1.8v1.8h-1.8zM363.2 345.2h1.8v1.8h-1.8zM367.9 311.6h1.8v1.8h-1.8zM372.6 277.9h1.8v1.8h-1.8zM413.7 323.2h1.8v1.8h-1.8zM418.4 289.6h1.8v1.8h-1.8zM423.0 255.9h1.8v1.8h-1.8zM464.1 301.2h1.8v1.8h-1.8zM468.8 267.6h1.8v1.8h-1.8zM473.5 233.9h1.8v1.8h-1.8zM514.6 279.2h1.8v1.8h-1.8zM519.3 245.5h1.8v1.8h-1.8zM523.9 211.9h1.8v1.8h-1.8zM565.0 257.2h1.8v1.8h-1.8zM569.7 223.5h1.8v1.8h-1.8zM574.4 189.9h1.8v1.8h-1.8zM615.5 235.2h1.8v1.8h-1.8zM620.2 201.5h1.8v1.8h-1.8zM624.8 167.8h1.8v1.8h-1.8zM665.9 213.2h1.8v1.8h-1.8zM670.6 179.5h1.8v1.8h-1.8zM675.3 145.8h1.8v1.8h-1.8zM716.4 191.2h1.8v1.8h-1.8zM721.1 157.5h1.8v1.8h-1.8zM725.7 123.8h1.8v1.8h-1.8zM766.8 169.2h1.8v1.8h-1.8zM771.5 135.5h1.8v1.8h-1.8zM776.2 101.8h1.8v1.8h-1.8zM817.3 147.2h1.8v1.8h-1.8zM822.0 113.5h1.8v1.8h-1.8zM407.7 451.9h1.8v1.8h-1.8zM458.2 429.9h1.8v1.8h-1.8zM508.6 407.9h1.8v1.8h-1.8zM559.1 385.9h1.8v1.8h-1.8zM609.5 363.9h1.8v1.8h-1.8zM660.0 341.8h1.8v1.8h-1.8zM710.4 319.8h1.8v1.8h-1.8zM760.9 297.8h1.8v1.8h-1.8zM811.3 275.8h1.8v1.8h-1.8zM861.8 253.8h1.8v1.8h-1.8z" fill="#d2622a" fill-opacity=".85"/>
<g stroke="#cacaca" stroke-width=".95" fill="none"><path d="M183.5 481V445.500M180.200 444.200L183.700 434.600 187.200 444.200Q183.700 447 180.200 444.200Z"/><path d="M186 483.800L208 494.300M208.800 491.200L217.500 499 206.500 497.600Q205.800 493.500 208.800 491.200Z"/><path d="M181.200 483.500L148 498"/><path d="M181 480.200l3.200-1.400 2.200 1.800v4l-3.200 1.400-2.200-1.800z"/></g>
<g font-family="Liberation Sans,sans-serif" font-size="15.400" fill="#dedede" stroke="#000" stroke-width=".35"><text x="181" y="426.900" textLength="8.600" lengthAdjust="spacingAndGlyphs">Y</text><text x="224" y="511.200" textLength="8" lengthAdjust="spacingAndGlyphs">X</text><text x="132.200" y="508.700" textLength="8.200" lengthAdjust="spacingAndGlyphs">Z</text></g>
<g stroke="#d8d8d8" stroke-width="1" fill="none"><path d="M771.1 396.3V450.300M748.300 411.400L793.900 435.400"/><rect x="769.800" y="421.900" width="2.600" height="2.600"/></g>
<g stroke="#d8d8d8" stroke-width="1" fill="none"><path d="M907.7 497.600V518"/><path d="M907.700 488.500v1.500M907.700 492v2"/><path d="M905.800 504l-5.300 4 5.300 4zM909.600 504l5.300 4-5.300 4z"/></g>
</svg></div>
<div id="rsb" class="abs"></div>
<svg class="ic" style="left:972px;top:73px" width="8" height="6" viewBox="0 0 8 6"><path d="M1 5l3-3.500L7 5z" fill="#444"/></svg>
<svg class="ic" style="left:972px;top:507px" width="8" height="6" viewBox="0 0 8 6"><path d="M1.500 1.500h5L4 4.500z" fill="#555"/></svg>
<div class="abs" style="left:971px;top:461px;width:10px;height:12px;background:#e6e6e6;border:1px solid #a8a8a8;border-radius:2px"></div>
<div class="abs" style="left:973.5px;top:464.5px;width:5px;height:1px;background:#888;box-shadow:0 2px 0 #888,0 4px 0 #888"></div>
<div id="rtb" class="abs"></div>
<svg class="ic" style="left:985px;top:74.3px" width="10" height="10" viewBox="0 0 10 10"><path d="M1 5l4-3 4 3-4 3z" fill="#eee" stroke="#333" stroke-width=".8"/><path d="M3 6l2 2 3-2" fill="#fc3" stroke="#333" stroke-width=".6"/><path d="M4 1h2v3H4z" fill="#ddd" stroke="#333" stroke-width=".6"/></svg>
<svg class="ic" style="left:985px;top:91.0px" width="10" height="10" viewBox="0 0 10 10"><ellipse cx="5" cy="6" rx="4" ry="2.500" fill="#1a8a2a" stroke="#121" stroke-width=".7"/><path d="M3 4h4" stroke="#121" stroke-width="1.200"/></svg>
<svg class="ic" style="left:985px;top:107.6px" width="10" height="10" viewBox="0 0 10 10"><path d="M8 1L2 4v5h6V6H3" fill="none" stroke="#111" stroke-width="1.100"/></svg>
<svg class="ic" style="left:985px;top:120.8px" width="10" height="10" viewBox="0 0 10 10"><path d="M2 2l5 4" stroke="#a90" stroke-width="1.400"/><path d="M7 5v4M5 9h4" stroke="#222" stroke-width="1"/><circle cx="2" cy="2" r="1.300" fill="#fe3"/></svg>
<svg class="ic" style="left:985px;top:133.0px" width="10" height="10" viewBox="0 0 10 10"><circle cx="5" cy="5" r="4" fill="#222"/><circle cx="5" cy="5" r="2.200" fill="#2a6"/><circle cx="6" cy="4" r=".9" fill="#fff"/></svg>
<svg class="ic" style="left:985px;top:146.0px" width="10" height="10" viewBox="0 0 10 10"><rect x="1" y="1" width="8" height="8" fill="#222"/><circle cx="4.500" cy="5" r="2.500" fill="#2a6"/><path d="M5 1h4v4" stroke="#fff" stroke-width="1" fill="none"/></svg>
<svg class="ic" style="left:985px;top:159.8px" width="10" height="10" viewBox="0 0 10 10"><ellipse cx="5" cy="6.500" rx="4" ry="2.500" fill="#1a8a2a" stroke="#520" stroke-width=".8"/><rect x="2" y="1" width="6" height="3" fill="#c63"/></svg>
<svg class="ic" style="left:985px;top:176.0px" width="10" height="10" viewBox="0 0 10 10"><rect x=".5" y="1" width="9" height="8" fill="#9cf" stroke="#68a" stroke-width=".6"/><rect x=".5" y="6" width="9" height="3" fill="#3a3"/><rect x="5" y="3" width="3" height="3" fill="#fd6"/></svg>
<svg class="ic" style="left:985px;top:202.0px" width="10" height="10" viewBox="0 0 10 10"><path d="M5 1l3 4H6l3 4H1l3-4H2z" fill="#2a2" stroke="#131" stroke-width=".5"/><circle cx="7.500" cy="2.500" r="1.300" fill="#6c4"/></svg>
<svg class="ic" style="left:985px;top:215.0px" width="10" height="10" viewBox="0 0 10 10"><path d="M4 1l3 4H5.500l3 4H.5l2.500-4H1.500z" fill="#2a2" stroke="#131" stroke-width=".5"/><path d="M6 2l3 2" stroke="#c33" stroke-width="1.200"/></svg>
<svg class="ic" style="left:985px;top:228.4px" width="10" height="10" viewBox="0 0 10 10"><path d="M4 1l3 4H5.500l3 4H.5l2.500-4H1.500z" fill="#2a2" stroke="#131" stroke-width=".5"/><rect x="5.500" y="4" width="4" height="5.500" fill="#dde" stroke="#334" stroke-width=".6"/></svg>
<svg class="ic" style="left:985px;top:245.0px" width="10" height="10" viewBox="0 0 10 10"><path d="M1 5l4-4 4 4-4 4z" fill="#1a6a2a" stroke="#121" stroke-width=".7"/><circle cx="5" cy="5" r="1.500" fill="#9d9"/></svg>
<svg class="ic" style="left:985px;top:257.6px" width="10" height="10" viewBox="0 0 10 10"><rect x="1" y="1" width="8" height="8" rx="2" fill="#222"/><circle cx="5" cy="5.500" r="2" fill="#2a6"/><circle cx="5" cy="5" r=".8" fill="#fff"/></svg>
<div class="abs" style="left:984px;top:71px;width:12px;height:1px;background:#b8b8b8;box-shadow:0 1px 0 #fff"></div>
<div class="abs" style="left:984px;top:88px;width:12px;height:1px;background:#b8b8b8;box-shadow:0 1px 0 #fff"></div>
<div class="abs" style="left:984px;top:104px;width:12px;height:1px;background:#b8b8b8;box-shadow:0 1px 0 #fff"></div>
<div class="abs" style="left:984px;top:173px;width:12px;height:1px;background:#b8b8b8;box-shadow:0 1px 0 #fff"></div>
<div class="abs" style="left:984px;top:189px;width:12px;height:1px;background:#b8b8b8;box-shadow:0 1px 0 #fff"></div>
<div class="abs" style="left:984px;top:198px;width:12px;height:1px;background:#b8b8b8;box-shadow:0 1px 0 #fff"></div>
<div class="abs" style="left:984px;top:241px;width:12px;height:1px;background:#b8b8b8;box-shadow:0 1px 0 #fff"></div>
<div class="abs" style="left:984px;top:272px;width:12px;height:1px;background:#b8b8b8;box-shadow:0 1px 0 #fff"></div>
<div class="abs" style="left:994.5px;top:68px;width:2.500px;height:110px;background:#d9d9d9"></div>
<div id="tabs" class="abs"></div>
<svg class="ic" style="left:124.5px;top:520.5px" width="9" height="9.5" viewBox="0 0 9 8" preserveAspectRatio="none"><rect x=".3" y=".3" width="8.400" height="7.400" fill="#f4f4f4" stroke="#bbb" stroke-width=".5"/><path d="M2.500 1.500v5M6.500 1.500L3.500 4l3 2.500z" fill="#111" stroke="#111" stroke-width=".8"/></svg>
<svg class="ic" style="left:134.2px;top:520.5px" width="9" height="9.5" viewBox="0 0 9 8" preserveAspectRatio="none"><rect x=".3" y=".3" width="8.400" height="7.400" fill="#f4f4f4" stroke="#bbb" stroke-width=".5"/><path d="M6 1.500L3 4l3 2.500z" fill="#111"/></svg>
<svg class="ic" style="left:143.9px;top:520.5px" width="9" height="9.5" viewBox="0 0 9 8" preserveAspectRatio="none"><rect x=".3" y=".3" width="8.400" height="7.400" fill="#f4f4f4" stroke="#bbb" stroke-width=".5"/><path d="M3 1.500L6 4 3 6.500z" fill="#111"/></svg>
<svg class="ic" style="left:153.6px;top:520.5px" width="9" height="9.5" viewBox="0 0 9 8" preserveAspectRatio="none"><rect x=".3" y=".3" width="8.400" height="7.400" fill="#f4f4f4" stroke="#bbb" stroke-width=".5"/><path d="M6.500 1.500v5M2.500 1.500L5.500 4l-3 2.500z" fill="#111" stroke="#111" stroke-width=".8"/></svg>
<svg class="ic" style="left:163px;top:519px" width="74" height="13" viewBox="0 0 74 13"><path d="M0 0h35l-3.500 11.600H4z" fill="#000"/><path d="M35.200 0l2.800 11.300h30L71.500 0" fill="#fff" stroke="#222" stroke-width=".9"/><text x="6" y="8.800" font-family="Liberation Sans,sans-serif" font-size="8" font-weight="bold" fill="#fff" textLength="22" lengthAdjust="spacingAndGlyphs">Model</text><text x="39.200" y="8.800" font-family="Liberation Sans,sans-serif" font-size="8" fill="#111" textLength="23.600" lengthAdjust="spacingAndGlyphs">Layout1</text></svg>
<div class="abs" style="left:683px;top:519px;width:287px;height:11.500px;background:#f4f4f4;border-bottom:1px solid #d0d0d0"></div>
<svg class="ic" style="left:683px;top:519.3px" width="15" height="11" viewBox="0 0 15 11"><rect x=".5" y=".5" width="14" height="10" fill="#ececec" stroke="#aaa" stroke-width=".8"/><path d="M9 2.500L5.500 5.500 9 8.500z" fill="#111"/></svg>
<svg class="ic" style="left:957px;top:519.3px" width="13" height="11" viewBox="0 0 13 11"><rect x=".5" y=".5" width="12" height="10" fill="#ececec" stroke="#aaa" stroke-width=".8"/><path d="M5 2.500L8.500 5.500 5 8.500z" fill="#111"/></svg>
<div class="abs" style="left:849px;top:519.5px;width:11px;height:11px;background:#e4e4e4;border:1px solid #a8a8a8;border-radius:1.500px"></div>
<div id="cmd" class="abs"></div><div class="abs" style="left:3px;top:535px;width:994px;height:1px;background:#d8d8d8"></div><div id="cmdbox" class="abs"></div>
<div class="abs" style="left:4px;top:556px;width:960px;height:1px;background:#d4d4d4"></div>
<div class="abs" style="left:4px;top:557px;width:976px;height:1.500px;background:#f2f2f2"></div>
<div class="t" style="left:5.00px;top:538.86px;font-size:7.75px;transform:scaleX(0.9922);font-family:'Liberation Mono',monospace;">shortcut-menu.</div>
<div class="t" style="left:5.00px;top:548.06px;font-size:7.75px;transform:scaleX(0.9922);font-family:'Liberation Mono',monospace;">Regenerating model.</div>
<div class="t" style="left:5.00px;top:558.66px;font-size:7.75px;transform:scaleX(0.9922);font-family:'Liberation Mono',monospace;">Command:</div>
<div class="abs" style="left:3.6px;top:538px;width:1.4px;height:29.500px;background:#7c7c7c"></div>
<svg class="ic" style="left:984.5px;top:538.5px" width="8" height="16" viewBox="0 0 8 16"><path d="M2.500 4.500L4 2.500l1.500 2zM2.500 10.500L4 12.500l1.500-2z" fill="#333"/></svg>
<div class="abs" style="left:938px;top:556.8px;width:45.5px;height:11.500px;background:#f0f0f0"></div>
<svg class="ic" style="left:939.5px;top:557.5px" width="44" height="10" viewBox="0 0 44 10"><rect x=".5" y=".5" width="10" height="9" fill="#ececec" stroke="#aaa" stroke-width=".8"/><path d="M7 2.500L4 5l3 2.500z" fill="#111"/><rect x="11" y=".5" width="12" height="9" fill="#e4e4e4" stroke="#aaa" stroke-width=".8"/><rect x="32.500" y=".5" width="10" height="9" fill="#ececec" stroke="#aaa" stroke-width=".8"/><path d="M36.500 2.500l3 2.500-3 2.500z" fill="#111"/></svg>
<div id="status" class="abs"></div>
<div class="sbox" style="left:8px;width:246px"></div><div class="sbox" style="left:255px;width:700px;border-color:transparent"></div>
<div class="t" style="left:10.00px;top:572.64px;font-size:8.1px;transform:scaleX(0.8607);color:#222;">Target Б12Х30__3Д</div>
<div class="abs" style="left:74.2px;top:572.5px;width:1px;height:8px;background:#555"></div>
<div class="t" style="left:77.60px;top:572.64px;font-size:8.1px;transform:scaleX(0.8474);color:#222;">END,MID,CEN,NOD,INT,EXT</div>
<div class="abs" style="left:170.7px;top:572.5px;width:1px;height:8px;background:#555"></div>
<div class="t" style="left:172.20px;top:572.64px;font-size:8.1px;transform:scaleX(0.8655);color:#222;">Target ДВ×20×8__ЭСКИЗ</div>
<div class="sbox" style="left:256px;width:145px"></div>
<div class="t" style="left:258.80px;top:572.64px;font-size:8.1px;transform:scaleX(0.7737);color:#222;">30121.40, 8918.16 , 0.00</div>
<div class="t" style="left:403.70px;top:572.64px;font-size:8.1px;transform:scaleX(0.8160);color:#222;">SNAP</div>
<div class="t" style="left:426.20px;top:572.64px;font-size:8.1px;transform:scaleX(0.8000);color:#222;">GRID</div>
<div class="t" style="left:447.60px;top:572.64px;font-size:8.1px;transform:scaleX(0.8384);color:#222;">ORTHO</div>
<div class="t" style="left:475.00px;top:572.64px;font-size:8.1px;transform:scaleX(0.8193);color:#222;">POLAR</div>
<div class="t" style="left:503.00px;top:572.64px;font-size:8.1px;transform:scaleX(0.8251);color:#222;">OSNAP</div>
<div class="t" style="left:530.00px;top:572.64px;font-size:8.1px;transform:scaleX(0.8355);color:#222;">OTRACK</div>
<div class="t" style="left:562.00px;top:572.64px;font-size:8.1px;transform:scaleX(0.8183);color:#222;">LWT</div>
<div class="t" style="left:580.70px;top:572.64px;font-size:8.1px;transform:scaleX(0.8193);color:#222;">MODEL</div>
<div class="sbox" style="left:445.2px;width:28.5px"></div>
<div class="sbox" style="left:500.5px;width:28px"></div>
<div class="sbox" style="left:578.5px;width:27.5px"></div>
<div class="abs" style="left:423.8px;top:572px;width:1px;height:8px;background:#aaa"></div>
</body></html>
